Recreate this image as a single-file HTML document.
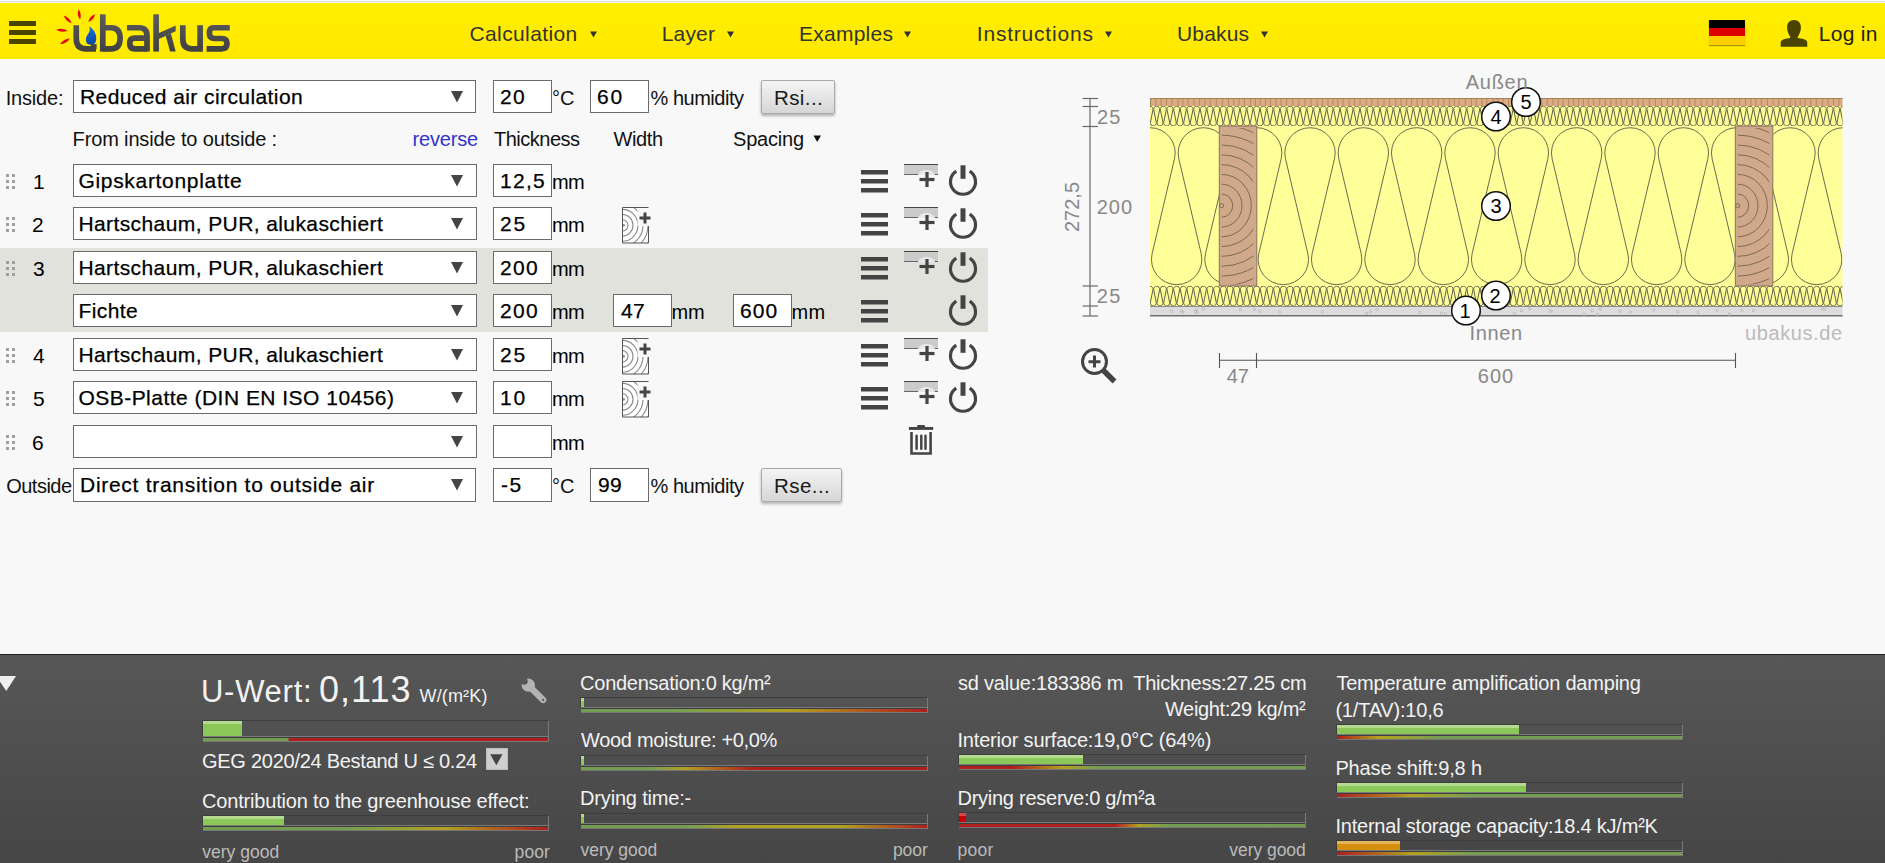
<!DOCTYPE html>
<html><head><meta charset="utf-8"><title>ubakus</title>
<style>
html,body{margin:0;padding:0;width:1885px;height:863px;overflow:hidden;background:#f8f8f8;font-family:"Liberation Sans", sans-serif}
.t{position:absolute;white-space:nowrap}
svg{overflow:visible}
</style></head><body>
<div style="position:absolute;left:0;top:0;width:1885px;height:1px;background:#fff"></div>
<div style="position:absolute;left:0;top:1px;width:1885px;height:1px;background:#dfe0de"></div>
<div style="position:absolute;left:0;top:2px;width:1885px;height:1px;background:#f4f5fc"></div>
<div style="position:absolute;left:0;top:3px;width:1885px;height:56px;background:linear-gradient(#ffef00,#ffe800)"></div>
<div style="position:absolute;left:9px;top:21px;width:27px;height:4.5px;background:#4a4400"></div>
<div style="position:absolute;left:9px;top:30px;width:27px;height:4.5px;background:#4a4400"></div>
<div style="position:absolute;left:9px;top:39px;width:27px;height:4.5px;background:#4a4400"></div>
<svg style="position:absolute;left:50px;top:5px" width="190" height="54" viewBox="50 5 190 54">
<defs><linearGradient id="lg" gradientUnits="userSpaceOnUse" x1="0" y1="14" x2="0" y2="52"><stop offset="0" stop-color="#5c5c5c"/><stop offset="1" stop-color="#404040"/></linearGradient>
<linearGradient id="dg" gradientUnits="userSpaceOnUse" x1="0" y1="26" x2="0" y2="45"><stop offset="0" stop-color="#2270d8"/><stop offset="1" stop-color="#0046a6"/></linearGradient></defs>
<g fill="none" stroke="url(#lg)" stroke-width="5.7" stroke-linecap="butt">
<path d="M76.25 25.2 V38.5 Q76.25 48.85 86 48.85 H96"/>
<path d="M93.75 44.1 V49"/>
<path d="M102.8 14.3 V51.6"/>
<path d="M102.8 27.75 H111 Q120.1 27.75 120.1 38.3 Q120.1 48.8 111 48.8 H102.8"/>
<path d="M127 27.75 H139 Q147 27.75 147 35.5 V51.6"/>
<path d="M147 38.2 H134.5 Q129.7 38.2 129.7 43.5 Q129.7 48.8 135 48.8 H147"/>
<path d="M156.1 14.3 V51.6"/>
<path d="M182.8 25.2 V39 Q182.8 48.8 192 48.8 H202.9"/>
<path d="M200.1 25.2 V49"/>
<path d="M229.8 27.75 H213.5 Q209.4 27.75 209.4 33 Q209.4 38.5 214.5 38.5 H222 Q227 38.5 227 43.6 Q227 48.8 221.5 48.8 H206.6"/>
</g>
<g fill="url(#lg)">
<path d="M158.9 32.9 L175.7 25.5 L175.7 31.3 L158.9 39Z"/>
<path d="M165.6 35.6 L170.9 33.6 L175.7 51.6 L170.1 51.6Z"/>
</g>
<g fill="#e30a17"><path d="M78.50 9.30 Q76.38 14.82 80.00 19.50 Q82.12 13.98 78.50 9.30Z"/><path d="M63.80 15.40 Q65.59 21.34 71.50 23.20 Q69.71 17.26 63.80 15.40Z"/><path d="M95.10 14.20 Q89.48 16.18 88.20 22.00 Q93.82 20.02 95.10 14.20Z"/><path d="M56.10 29.70 Q61.55 33.09 67.50 30.70 Q62.05 27.31 56.10 29.70Z"/><path d="M60.20 44.30 Q66.52 43.95 69.90 38.60 Q63.58 38.95 60.20 44.30Z"/></g>
<path d="M89.3 26.3 C95 30.5 96.6 35 96.2 39.5 Q95.7 44.7 91 44.7 Q85.9 44.7 85.9 40 Q85.9 36.5 88.3 33.6 Q90.6 30.5 89.3 26.3Z" fill="url(#dg)"/>
</svg>
<svg style="position:absolute;left:589.5px;top:31px" width="8" height="7"><path d="M0 0.5H7L3.5 6.5Z" fill="#333"/></svg>
<svg style="position:absolute;left:727px;top:31px" width="8" height="7"><path d="M0 0.5H7L3.5 6.5Z" fill="#333"/></svg>
<svg style="position:absolute;left:903.6px;top:31px" width="8" height="7"><path d="M0 0.5H7L3.5 6.5Z" fill="#333"/></svg>
<svg style="position:absolute;left:1105px;top:31px" width="8" height="7"><path d="M0 0.5H7L3.5 6.5Z" fill="#333"/></svg>
<svg style="position:absolute;left:1261.4px;top:31px" width="8" height="7"><path d="M0 0.5H7L3.5 6.5Z" fill="#333"/></svg>
<div style="position:absolute;left:1709px;top:20px;width:36px;height:24.5px;box-shadow:0 1px 1px rgba(0,0,0,.35)"><div style="height:8px;background:#000"></div><div style="height:8px;background:#dd0000"></div><div style="height:8.5px;background:#ffce00"></div></div>
<svg style="position:absolute;left:1778px;top:18px" width="32" height="32" viewBox="0 0 32 32"><path fill="#4a4400" d="M16 2.1 C11.8 2.1 9.1 5 9.1 9.3 C9.1 13 10.5 16.5 12.2 18.8 L12.2 20 C8 20.7 4.2 21.3 3.2 23 C2.7 23.8 2.7 25 2.7 28.7 L29.3 28.7 C29.3 25 29.3 23.8 28.8 23 C27.8 21.3 24 20.7 19.8 20 L19.8 18.8 C21.5 16.5 22.9 13 22.9 9.3 C22.9 5 20.2 2.1 16 2.1Z"/></svg>
<div style="position:absolute;left:0;top:248px;width:988px;height:84px;background:#e2e2dc"></div>
<div style="position:absolute;left:73px;top:80px;width:403px;height:33px;box-sizing:border-box;border:1px solid #6b6b6b;background:#fff"></div>
<svg style="position:absolute;left:451px;top:91px" width="13" height="12"><path d="M0 0H12L6 11.5Z" fill="#444"/></svg>
<div style="position:absolute;left:493px;top:80px;width:59px;height:33px;box-sizing:border-box;border:1px solid #6b6b6b;background:#fff"></div>
<div style="position:absolute;left:590px;top:80px;width:59px;height:33px;box-sizing:border-box;border:1px solid #6b6b6b;background:#fff"></div>
<div style="position:absolute;left:761px;top:80px;width:74px;height:34px;box-sizing:border-box;border:1px solid #a9a9a9;border-radius:2px;background:linear-gradient(#f4f4f4,#d6d6d6);box-shadow:0 2px 3px rgba(0,0,0,.28)"></div>
<svg style="position:absolute;left:813px;top:135px" width="9" height="8"><path d="M0.5 0.5H8L4.25 7Z" fill="#111"/></svg>
<div style="position:absolute;left:6px;top:174px;width:3px;height:3px;background:#a0a0a0"></div>
<div style="position:absolute;left:12px;top:174px;width:3px;height:3px;background:#a0a0a0"></div>
<div style="position:absolute;left:6px;top:180px;width:3px;height:3px;background:#a0a0a0"></div>
<div style="position:absolute;left:12px;top:180px;width:3px;height:3px;background:#a0a0a0"></div>
<div style="position:absolute;left:6px;top:186px;width:3px;height:3px;background:#a0a0a0"></div>
<div style="position:absolute;left:12px;top:186px;width:3px;height:3px;background:#a0a0a0"></div>
<div style="position:absolute;left:73px;top:164px;width:404px;height:33px;box-sizing:border-box;border:1px solid #6b6b6b;background:#fff"></div>
<svg style="position:absolute;left:451px;top:175px" width="13" height="12"><path d="M0 0H12L6 11.5Z" fill="#444"/></svg>
<div style="position:absolute;left:493px;top:164px;width:59px;height:33px;box-sizing:border-box;border:1px solid #6b6b6b;background:#fff"></div>
<svg style="position:absolute;left:861px;top:169px" width="27" height="24"><rect x="0" y="1" width="27" height="4.5" fill="#444"/><rect x="0" y="10" width="27" height="4.5" fill="#444"/><rect x="0" y="19" width="27" height="4.5" fill="#444"/></svg>
<svg style="position:absolute;left:903px;top:164px" width="36" height="25"><rect x="1" y="0" width="34" height="1" fill="#444"/><rect x="1" y="1" width="34" height="9.5" fill="#cbcbcb"/><rect x="1" y="10" width="34" height="1" fill="#666"/>
<path d="M14.8 11 A9 7 0 0 1 32 11Z" fill="#e8e8e8"/><rect x="22.4" y="8" width="3.2" height="15" fill="#444"/><rect x="16.5" y="13.9" width="15" height="3.2" fill="#444"/></svg>
<svg style="position:absolute;left:947px;top:164px" width="32" height="34"><path d="M9.3 7.2 A12.5 12.5 0 1 0 22.7 7.2" fill="none" stroke="#444" stroke-width="3.2"/><rect x="13.5" y="1.3" width="5" height="13.5" fill="#444"/></svg>
<div style="position:absolute;left:6px;top:217px;width:3px;height:3px;background:#a0a0a0"></div>
<div style="position:absolute;left:12px;top:217px;width:3px;height:3px;background:#a0a0a0"></div>
<div style="position:absolute;left:6px;top:223px;width:3px;height:3px;background:#a0a0a0"></div>
<div style="position:absolute;left:12px;top:223px;width:3px;height:3px;background:#a0a0a0"></div>
<div style="position:absolute;left:6px;top:229px;width:3px;height:3px;background:#a0a0a0"></div>
<div style="position:absolute;left:12px;top:229px;width:3px;height:3px;background:#a0a0a0"></div>
<div style="position:absolute;left:73px;top:207px;width:404px;height:33px;box-sizing:border-box;border:1px solid #6b6b6b;background:#fff"></div>
<svg style="position:absolute;left:451px;top:218px" width="13" height="12"><path d="M0 0H12L6 11.5Z" fill="#444"/></svg>
<div style="position:absolute;left:493px;top:207px;width:59px;height:33px;box-sizing:border-box;border:1px solid #6b6b6b;background:#fff"></div>
<svg style="position:absolute;left:621px;top:207px" width="34" height="38"><defs><clipPath id="wc207"><rect x="1.5" y="1" width="26" height="35"/></clipPath></defs><rect x="1.5" y="0.5" width="26" height="35.5" fill="#fff"/><g clip-path="url(#wc207)" fill="none" stroke="#8a8a8a" stroke-width="1.1"><ellipse cx="1.5" cy="18.3" rx="5.5" ry="5.665"/><ellipse cx="1.5" cy="18.3" rx="10.5" ry="10.815"/><ellipse cx="1.5" cy="18.3" rx="15.5" ry="15.965"/><ellipse cx="1.5" cy="18.3" rx="20.5" ry="21.115000000000002"/><ellipse cx="1.5" cy="18.3" rx="25.5" ry="26.265"/><ellipse cx="1.5" cy="18.3" rx="30.5" ry="31.415"/><ellipse cx="1.5" cy="18.3" rx="35.5" ry="36.565"/><circle cx="2.5" cy="18.3" r="1.4" fill="#8a8a8a" stroke="none"/></g><path d="M1.5 0.5 H27.5 M1.5 0.5 V36 H27.5 V19" fill="none" stroke="#555" stroke-width="1"/><rect x="16.5" y="1" width="15" height="18" fill="#f8f8f8"/><rect x="22.5" y="5.5" width="3" height="11" fill="#444"/><rect x="18.5" y="9.5" width="11" height="3" fill="#444"/></svg>
<svg style="position:absolute;left:861px;top:212px" width="27" height="24"><rect x="0" y="1" width="27" height="4.5" fill="#444"/><rect x="0" y="10" width="27" height="4.5" fill="#444"/><rect x="0" y="19" width="27" height="4.5" fill="#444"/></svg>
<svg style="position:absolute;left:903px;top:207px" width="36" height="25"><rect x="1" y="0" width="34" height="1" fill="#444"/><rect x="1" y="1" width="34" height="9.5" fill="#cbcbcb"/><rect x="1" y="10" width="34" height="1" fill="#666"/>
<path d="M14.8 11 A9 7 0 0 1 32 11Z" fill="#e8e8e8"/><rect x="22.4" y="8" width="3.2" height="15" fill="#444"/><rect x="16.5" y="13.9" width="15" height="3.2" fill="#444"/></svg>
<svg style="position:absolute;left:947px;top:207px" width="32" height="34"><path d="M9.3 7.2 A12.5 12.5 0 1 0 22.7 7.2" fill="none" stroke="#444" stroke-width="3.2"/><rect x="13.5" y="1.3" width="5" height="13.5" fill="#444"/></svg>
<div style="position:absolute;left:6px;top:261px;width:3px;height:3px;background:#a0a0a0"></div>
<div style="position:absolute;left:12px;top:261px;width:3px;height:3px;background:#a0a0a0"></div>
<div style="position:absolute;left:6px;top:267px;width:3px;height:3px;background:#a0a0a0"></div>
<div style="position:absolute;left:12px;top:267px;width:3px;height:3px;background:#a0a0a0"></div>
<div style="position:absolute;left:6px;top:273px;width:3px;height:3px;background:#a0a0a0"></div>
<div style="position:absolute;left:12px;top:273px;width:3px;height:3px;background:#a0a0a0"></div>
<div style="position:absolute;left:73px;top:251px;width:404px;height:33px;box-sizing:border-box;border:1px solid #6b6b6b;background:#fff"></div>
<svg style="position:absolute;left:451px;top:262px" width="13" height="12"><path d="M0 0H12L6 11.5Z" fill="#444"/></svg>
<div style="position:absolute;left:493px;top:251px;width:59px;height:33px;box-sizing:border-box;border:1px solid #6b6b6b;background:#fff"></div>
<svg style="position:absolute;left:861px;top:256px" width="27" height="24"><rect x="0" y="1" width="27" height="4.5" fill="#444"/><rect x="0" y="10" width="27" height="4.5" fill="#444"/><rect x="0" y="19" width="27" height="4.5" fill="#444"/></svg>
<svg style="position:absolute;left:903px;top:251px" width="36" height="25"><rect x="1" y="0" width="34" height="1" fill="#444"/><rect x="1" y="1" width="34" height="9.5" fill="#cbcbcb"/><rect x="1" y="10" width="34" height="1" fill="#666"/>
<path d="M14.8 11 A9 7 0 0 1 32 11Z" fill="#e8e8e8"/><rect x="22.4" y="8" width="3.2" height="15" fill="#444"/><rect x="16.5" y="13.9" width="15" height="3.2" fill="#444"/></svg>
<svg style="position:absolute;left:947px;top:251px" width="32" height="34"><path d="M9.3 7.2 A12.5 12.5 0 1 0 22.7 7.2" fill="none" stroke="#444" stroke-width="3.2"/><rect x="13.5" y="1.3" width="5" height="13.5" fill="#444"/></svg>
<div style="position:absolute;left:6px;top:348px;width:3px;height:3px;background:#a0a0a0"></div>
<div style="position:absolute;left:12px;top:348px;width:3px;height:3px;background:#a0a0a0"></div>
<div style="position:absolute;left:6px;top:354px;width:3px;height:3px;background:#a0a0a0"></div>
<div style="position:absolute;left:12px;top:354px;width:3px;height:3px;background:#a0a0a0"></div>
<div style="position:absolute;left:6px;top:360px;width:3px;height:3px;background:#a0a0a0"></div>
<div style="position:absolute;left:12px;top:360px;width:3px;height:3px;background:#a0a0a0"></div>
<div style="position:absolute;left:73px;top:338px;width:404px;height:33px;box-sizing:border-box;border:1px solid #6b6b6b;background:#fff"></div>
<svg style="position:absolute;left:451px;top:349px" width="13" height="12"><path d="M0 0H12L6 11.5Z" fill="#444"/></svg>
<div style="position:absolute;left:493px;top:338px;width:59px;height:33px;box-sizing:border-box;border:1px solid #6b6b6b;background:#fff"></div>
<svg style="position:absolute;left:621px;top:338px" width="34" height="38"><defs><clipPath id="wc338"><rect x="1.5" y="1" width="26" height="35"/></clipPath></defs><rect x="1.5" y="0.5" width="26" height="35.5" fill="#fff"/><g clip-path="url(#wc338)" fill="none" stroke="#8a8a8a" stroke-width="1.1"><ellipse cx="1.5" cy="18.3" rx="5.5" ry="5.665"/><ellipse cx="1.5" cy="18.3" rx="10.5" ry="10.815"/><ellipse cx="1.5" cy="18.3" rx="15.5" ry="15.965"/><ellipse cx="1.5" cy="18.3" rx="20.5" ry="21.115000000000002"/><ellipse cx="1.5" cy="18.3" rx="25.5" ry="26.265"/><ellipse cx="1.5" cy="18.3" rx="30.5" ry="31.415"/><ellipse cx="1.5" cy="18.3" rx="35.5" ry="36.565"/><circle cx="2.5" cy="18.3" r="1.4" fill="#8a8a8a" stroke="none"/></g><path d="M1.5 0.5 H27.5 M1.5 0.5 V36 H27.5 V19" fill="none" stroke="#555" stroke-width="1"/><rect x="16.5" y="1" width="15" height="18" fill="#f8f8f8"/><rect x="22.5" y="5.5" width="3" height="11" fill="#444"/><rect x="18.5" y="9.5" width="11" height="3" fill="#444"/></svg>
<svg style="position:absolute;left:861px;top:343px" width="27" height="24"><rect x="0" y="1" width="27" height="4.5" fill="#444"/><rect x="0" y="10" width="27" height="4.5" fill="#444"/><rect x="0" y="19" width="27" height="4.5" fill="#444"/></svg>
<svg style="position:absolute;left:903px;top:338px" width="36" height="25"><rect x="1" y="0" width="34" height="1" fill="#444"/><rect x="1" y="1" width="34" height="9.5" fill="#cbcbcb"/><rect x="1" y="10" width="34" height="1" fill="#666"/>
<path d="M14.8 11 A9 7 0 0 1 32 11Z" fill="#e8e8e8"/><rect x="22.4" y="8" width="3.2" height="15" fill="#444"/><rect x="16.5" y="13.9" width="15" height="3.2" fill="#444"/></svg>
<svg style="position:absolute;left:947px;top:338px" width="32" height="34"><path d="M9.3 7.2 A12.5 12.5 0 1 0 22.7 7.2" fill="none" stroke="#444" stroke-width="3.2"/><rect x="13.5" y="1.3" width="5" height="13.5" fill="#444"/></svg>
<div style="position:absolute;left:6px;top:391px;width:3px;height:3px;background:#a0a0a0"></div>
<div style="position:absolute;left:12px;top:391px;width:3px;height:3px;background:#a0a0a0"></div>
<div style="position:absolute;left:6px;top:397px;width:3px;height:3px;background:#a0a0a0"></div>
<div style="position:absolute;left:12px;top:397px;width:3px;height:3px;background:#a0a0a0"></div>
<div style="position:absolute;left:6px;top:403px;width:3px;height:3px;background:#a0a0a0"></div>
<div style="position:absolute;left:12px;top:403px;width:3px;height:3px;background:#a0a0a0"></div>
<div style="position:absolute;left:73px;top:381px;width:404px;height:33px;box-sizing:border-box;border:1px solid #6b6b6b;background:#fff"></div>
<svg style="position:absolute;left:451px;top:392px" width="13" height="12"><path d="M0 0H12L6 11.5Z" fill="#444"/></svg>
<div style="position:absolute;left:493px;top:381px;width:59px;height:33px;box-sizing:border-box;border:1px solid #6b6b6b;background:#fff"></div>
<svg style="position:absolute;left:621px;top:381px" width="34" height="38"><defs><clipPath id="wc381"><rect x="1.5" y="1" width="26" height="35"/></clipPath></defs><rect x="1.5" y="0.5" width="26" height="35.5" fill="#fff"/><g clip-path="url(#wc381)" fill="none" stroke="#8a8a8a" stroke-width="1.1"><ellipse cx="1.5" cy="18.3" rx="5.5" ry="5.665"/><ellipse cx="1.5" cy="18.3" rx="10.5" ry="10.815"/><ellipse cx="1.5" cy="18.3" rx="15.5" ry="15.965"/><ellipse cx="1.5" cy="18.3" rx="20.5" ry="21.115000000000002"/><ellipse cx="1.5" cy="18.3" rx="25.5" ry="26.265"/><ellipse cx="1.5" cy="18.3" rx="30.5" ry="31.415"/><ellipse cx="1.5" cy="18.3" rx="35.5" ry="36.565"/><circle cx="2.5" cy="18.3" r="1.4" fill="#8a8a8a" stroke="none"/></g><path d="M1.5 0.5 H27.5 M1.5 0.5 V36 H27.5 V19" fill="none" stroke="#555" stroke-width="1"/><rect x="16.5" y="1" width="15" height="18" fill="#f8f8f8"/><rect x="22.5" y="5.5" width="3" height="11" fill="#444"/><rect x="18.5" y="9.5" width="11" height="3" fill="#444"/></svg>
<svg style="position:absolute;left:861px;top:386px" width="27" height="24"><rect x="0" y="1" width="27" height="4.5" fill="#444"/><rect x="0" y="10" width="27" height="4.5" fill="#444"/><rect x="0" y="19" width="27" height="4.5" fill="#444"/></svg>
<svg style="position:absolute;left:903px;top:381px" width="36" height="25"><rect x="1" y="0" width="34" height="1" fill="#444"/><rect x="1" y="1" width="34" height="9.5" fill="#cbcbcb"/><rect x="1" y="10" width="34" height="1" fill="#666"/>
<path d="M14.8 11 A9 7 0 0 1 32 11Z" fill="#e8e8e8"/><rect x="22.4" y="8" width="3.2" height="15" fill="#444"/><rect x="16.5" y="13.9" width="15" height="3.2" fill="#444"/></svg>
<svg style="position:absolute;left:947px;top:381px" width="32" height="34"><path d="M9.3 7.2 A12.5 12.5 0 1 0 22.7 7.2" fill="none" stroke="#444" stroke-width="3.2"/><rect x="13.5" y="1.3" width="5" height="13.5" fill="#444"/></svg>
<div style="position:absolute;left:6px;top:435px;width:3px;height:3px;background:#a0a0a0"></div>
<div style="position:absolute;left:12px;top:435px;width:3px;height:3px;background:#a0a0a0"></div>
<div style="position:absolute;left:6px;top:441px;width:3px;height:3px;background:#a0a0a0"></div>
<div style="position:absolute;left:12px;top:441px;width:3px;height:3px;background:#a0a0a0"></div>
<div style="position:absolute;left:6px;top:447px;width:3px;height:3px;background:#a0a0a0"></div>
<div style="position:absolute;left:12px;top:447px;width:3px;height:3px;background:#a0a0a0"></div>
<div style="position:absolute;left:73px;top:425px;width:404px;height:33px;box-sizing:border-box;border:1px solid #6b6b6b;background:#fff"></div>
<svg style="position:absolute;left:451px;top:436px" width="13" height="12"><path d="M0 0H12L6 11.5Z" fill="#444"/></svg>
<div style="position:absolute;left:493px;top:425px;width:59px;height:33px;box-sizing:border-box;border:1px solid #6b6b6b;background:#fff"></div>
<svg style="position:absolute;left:908px;top:424px" width="27" height="32"><rect x="0.9" y="3" width="24.3" height="2.9" fill="#444"/><path d="M9.6 1.1 H16.5 L17.2 3.1 H8.9Z" fill="#444"/><path d="M3.5 8 V29.45 H22.6 V8" fill="none" stroke="#444" stroke-width="2.6"/><path d="M8.6 11.8V24.7M13.3 11.8V24.7M17.5 11.8V24.7" stroke="#444" stroke-width="2.5" stroke-linecap="round"/></svg>
<div style="position:absolute;left:73px;top:294px;width:404px;height:33px;box-sizing:border-box;border:1px solid #6b6b6b;background:#fff"></div>
<svg style="position:absolute;left:451px;top:305px" width="13" height="12"><path d="M0 0H12L6 11.5Z" fill="#444"/></svg>
<div style="position:absolute;left:493px;top:294px;width:59px;height:33px;box-sizing:border-box;border:1px solid #6b6b6b;background:#fff"></div>
<div style="position:absolute;left:613px;top:294px;width:59px;height:33px;box-sizing:border-box;border:1px solid #6b6b6b;background:#fff"></div>
<div style="position:absolute;left:733px;top:294px;width:59px;height:33px;box-sizing:border-box;border:1px solid #6b6b6b;background:#fff"></div>
<svg style="position:absolute;left:861px;top:299px" width="27" height="24"><rect x="0" y="1" width="27" height="4.5" fill="#444"/><rect x="0" y="10" width="27" height="4.5" fill="#444"/><rect x="0" y="19" width="27" height="4.5" fill="#444"/></svg>
<svg style="position:absolute;left:947px;top:294px" width="32" height="34"><path d="M9.3 7.2 A12.5 12.5 0 1 0 22.7 7.2" fill="none" stroke="#444" stroke-width="3.2"/><rect x="13.5" y="1.3" width="5" height="13.5" fill="#444"/></svg>
<div style="position:absolute;left:73px;top:468px;width:403px;height:34px;box-sizing:border-box;border:1px solid #6b6b6b;background:#fff"></div>
<svg style="position:absolute;left:451px;top:479px" width="13" height="12"><path d="M0 0H12L6 11.5Z" fill="#444"/></svg>
<div style="position:absolute;left:493px;top:468px;width:59px;height:34px;box-sizing:border-box;border:1px solid #6b6b6b;background:#fff"></div>
<div style="position:absolute;left:590px;top:468px;width:59px;height:34px;box-sizing:border-box;border:1px solid #6b6b6b;background:#fff"></div>
<div style="position:absolute;left:761px;top:468px;width:81px;height:34px;box-sizing:border-box;border:1px solid #a9a9a9;border-radius:2px;background:linear-gradient(#f4f4f4,#d6d6d6);box-shadow:0 2px 3px rgba(0,0,0,.28)"></div>
<svg style="position:absolute;left:1050px;top:60px" width="835" height="340" viewBox="1050 60 835 340"><defs><clipPath id="cl4"><rect x="1150" y="106" width="692.5" height="20"/></clipPath><clipPath id="cl3"><rect x="1150" y="126" width="692.5" height="160"/></clipPath><clipPath id="cl2"><rect x="1150" y="286" width="692.5" height="20.5"/></clipPath><clipPath id="st0"><rect x="1221.8" y="128" width="31.5" height="156.5"/></clipPath><clipPath id="st1"><rect x="1737.8" y="128" width="31.5" height="156.5"/></clipPath></defs><rect x="1150" y="98" width="692.5" height="8" fill="#dcab85"/><rect x="1155.3" y="98.5" width="1" height="7.5" fill="#b08a60"/><rect x="1160.6" y="98.5" width="1" height="7.5" fill="#b08a60"/><rect x="1165.9" y="98.5" width="1" height="7.5" fill="#b08a60"/><rect x="1171.5" y="98.5" width="1" height="7.5" fill="#b08a60"/><rect x="1177.6" y="98.5" width="1" height="7.5" fill="#b08a60"/><rect x="1182.5" y="98.5" width="1" height="7.5" fill="#b08a60"/><rect x="1187.4" y="98.5" width="1" height="7.5" fill="#b08a60"/><rect x="1193.5" y="98.5" width="1" height="7.5" fill="#b08a60"/><rect x="1199.1" y="98.5" width="1" height="7.5" fill="#b08a60"/><rect x="1204.4" y="98.5" width="1" height="7.5" fill="#b08a60"/><rect x="1209.7" y="98.5" width="1" height="7.5" fill="#b08a60"/><rect x="1215.8" y="98.5" width="1" height="7.5" fill="#b08a60"/><rect x="1221.9" y="98.5" width="1" height="7.5" fill="#b08a60"/><rect x="1228.0" y="98.5" width="1" height="7.5" fill="#b08a60"/><rect x="1233.3" y="98.5" width="1" height="7.5" fill="#b08a60"/><rect x="1238.6" y="98.5" width="1" height="7.5" fill="#b08a60"/><rect x="1243.9" y="98.5" width="1" height="7.5" fill="#b08a60"/><rect x="1250.0" y="98.5" width="1" height="7.5" fill="#b08a60"/><rect x="1254.9" y="98.5" width="1" height="7.5" fill="#b08a60"/><rect x="1259.8" y="98.5" width="1" height="7.5" fill="#b08a60"/><rect x="1265.1" y="98.5" width="1" height="7.5" fill="#b08a60"/><rect x="1270.0" y="98.5" width="1" height="7.5" fill="#b08a60"/><rect x="1275.6" y="98.5" width="1" height="7.5" fill="#b08a60"/><rect x="1280.5" y="98.5" width="1" height="7.5" fill="#b08a60"/><rect x="1286.1" y="98.5" width="1" height="7.5" fill="#b08a60"/><rect x="1292.2" y="98.5" width="1" height="7.5" fill="#b08a60"/><rect x="1298.3" y="98.5" width="1" height="7.5" fill="#b08a60"/><rect x="1304.4" y="98.5" width="1" height="7.5" fill="#b08a60"/><rect x="1310.5" y="98.5" width="1" height="7.5" fill="#b08a60"/><rect x="1316.6" y="98.5" width="1" height="7.5" fill="#b08a60"/><rect x="1321.9" y="98.5" width="1" height="7.5" fill="#b08a60"/><rect x="1327.5" y="98.5" width="1" height="7.5" fill="#b08a60"/><rect x="1332.4" y="98.5" width="1" height="7.5" fill="#b08a60"/><rect x="1337.3" y="98.5" width="1" height="7.5" fill="#b08a60"/><rect x="1342.6" y="98.5" width="1" height="7.5" fill="#b08a60"/><rect x="1348.7" y="98.5" width="1" height="7.5" fill="#b08a60"/><rect x="1354.0" y="98.5" width="1" height="7.5" fill="#b08a60"/><rect x="1359.6" y="98.5" width="1" height="7.5" fill="#b08a60"/><rect x="1365.7" y="98.5" width="1" height="7.5" fill="#b08a60"/><rect x="1371.3" y="98.5" width="1" height="7.5" fill="#b08a60"/><rect x="1377.4" y="98.5" width="1" height="7.5" fill="#b08a60"/><rect x="1383.5" y="98.5" width="1" height="7.5" fill="#b08a60"/><rect x="1389.1" y="98.5" width="1" height="7.5" fill="#b08a60"/><rect x="1395.2" y="98.5" width="1" height="7.5" fill="#b08a60"/><rect x="1400.5" y="98.5" width="1" height="7.5" fill="#b08a60"/><rect x="1406.1" y="98.5" width="1" height="7.5" fill="#b08a60"/><rect x="1411.0" y="98.5" width="1" height="7.5" fill="#b08a60"/><rect x="1416.6" y="98.5" width="1" height="7.5" fill="#b08a60"/><rect x="1421.9" y="98.5" width="1" height="7.5" fill="#b08a60"/><rect x="1427.5" y="98.5" width="1" height="7.5" fill="#b08a60"/><rect x="1432.4" y="98.5" width="1" height="7.5" fill="#b08a60"/><rect x="1437.7" y="98.5" width="1" height="7.5" fill="#b08a60"/><rect x="1443.3" y="98.5" width="1" height="7.5" fill="#b08a60"/><rect x="1448.9" y="98.5" width="1" height="7.5" fill="#b08a60"/><rect x="1453.8" y="98.5" width="1" height="7.5" fill="#b08a60"/><rect x="1458.7" y="98.5" width="1" height="7.5" fill="#b08a60"/><rect x="1464.8" y="98.5" width="1" height="7.5" fill="#b08a60"/><rect x="1470.9" y="98.5" width="1" height="7.5" fill="#b08a60"/><rect x="1475.8" y="98.5" width="1" height="7.5" fill="#b08a60"/><rect x="1481.4" y="98.5" width="1" height="7.5" fill="#b08a60"/><rect x="1486.3" y="98.5" width="1" height="7.5" fill="#b08a60"/><rect x="1492.4" y="98.5" width="1" height="7.5" fill="#b08a60"/><rect x="1497.7" y="98.5" width="1" height="7.5" fill="#b08a60"/><rect x="1502.6" y="98.5" width="1" height="7.5" fill="#b08a60"/><rect x="1508.2" y="98.5" width="1" height="7.5" fill="#b08a60"/><rect x="1514.3" y="98.5" width="1" height="7.5" fill="#b08a60"/><rect x="1520.4" y="98.5" width="1" height="7.5" fill="#b08a60"/><rect x="1525.3" y="98.5" width="1" height="7.5" fill="#b08a60"/><rect x="1530.2" y="98.5" width="1" height="7.5" fill="#b08a60"/><rect x="1535.1" y="98.5" width="1" height="7.5" fill="#b08a60"/><rect x="1541.2" y="98.5" width="1" height="7.5" fill="#b08a60"/><rect x="1546.8" y="98.5" width="1" height="7.5" fill="#b08a60"/><rect x="1552.4" y="98.5" width="1" height="7.5" fill="#b08a60"/><rect x="1557.7" y="98.5" width="1" height="7.5" fill="#b08a60"/><rect x="1562.6" y="98.5" width="1" height="7.5" fill="#b08a60"/><rect x="1568.2" y="98.5" width="1" height="7.5" fill="#b08a60"/><rect x="1573.1" y="98.5" width="1" height="7.5" fill="#b08a60"/><rect x="1578.0" y="98.5" width="1" height="7.5" fill="#b08a60"/><rect x="1582.9" y="98.5" width="1" height="7.5" fill="#b08a60"/><rect x="1587.8" y="98.5" width="1" height="7.5" fill="#b08a60"/><rect x="1593.1" y="98.5" width="1" height="7.5" fill="#b08a60"/><rect x="1599.2" y="98.5" width="1" height="7.5" fill="#b08a60"/><rect x="1604.8" y="98.5" width="1" height="7.5" fill="#b08a60"/><rect x="1610.4" y="98.5" width="1" height="7.5" fill="#b08a60"/><rect x="1615.7" y="98.5" width="1" height="7.5" fill="#b08a60"/><rect x="1620.6" y="98.5" width="1" height="7.5" fill="#b08a60"/><rect x="1626.2" y="98.5" width="1" height="7.5" fill="#b08a60"/><rect x="1631.8" y="98.5" width="1" height="7.5" fill="#b08a60"/><rect x="1637.4" y="98.5" width="1" height="7.5" fill="#b08a60"/><rect x="1642.7" y="98.5" width="1" height="7.5" fill="#b08a60"/><rect x="1648.8" y="98.5" width="1" height="7.5" fill="#b08a60"/><rect x="1654.9" y="98.5" width="1" height="7.5" fill="#b08a60"/><rect x="1661.0" y="98.5" width="1" height="7.5" fill="#b08a60"/><rect x="1667.1" y="98.5" width="1" height="7.5" fill="#b08a60"/><rect x="1672.0" y="98.5" width="1" height="7.5" fill="#b08a60"/><rect x="1677.6" y="98.5" width="1" height="7.5" fill="#b08a60"/><rect x="1683.7" y="98.5" width="1" height="7.5" fill="#b08a60"/><rect x="1689.0" y="98.5" width="1" height="7.5" fill="#b08a60"/><rect x="1694.6" y="98.5" width="1" height="7.5" fill="#b08a60"/><rect x="1700.7" y="98.5" width="1" height="7.5" fill="#b08a60"/><rect x="1706.3" y="98.5" width="1" height="7.5" fill="#b08a60"/><rect x="1711.9" y="98.5" width="1" height="7.5" fill="#b08a60"/><rect x="1717.5" y="98.5" width="1" height="7.5" fill="#b08a60"/><rect x="1722.4" y="98.5" width="1" height="7.5" fill="#b08a60"/><rect x="1728.5" y="98.5" width="1" height="7.5" fill="#b08a60"/><rect x="1734.1" y="98.5" width="1" height="7.5" fill="#b08a60"/><rect x="1739.0" y="98.5" width="1" height="7.5" fill="#b08a60"/><rect x="1745.1" y="98.5" width="1" height="7.5" fill="#b08a60"/><rect x="1750.4" y="98.5" width="1" height="7.5" fill="#b08a60"/><rect x="1755.3" y="98.5" width="1" height="7.5" fill="#b08a60"/><rect x="1760.9" y="98.5" width="1" height="7.5" fill="#b08a60"/><rect x="1767.0" y="98.5" width="1" height="7.5" fill="#b08a60"/><rect x="1772.6" y="98.5" width="1" height="7.5" fill="#b08a60"/><rect x="1778.2" y="98.5" width="1" height="7.5" fill="#b08a60"/><rect x="1783.8" y="98.5" width="1" height="7.5" fill="#b08a60"/><rect x="1789.9" y="98.5" width="1" height="7.5" fill="#b08a60"/><rect x="1794.8" y="98.5" width="1" height="7.5" fill="#b08a60"/><rect x="1799.7" y="98.5" width="1" height="7.5" fill="#b08a60"/><rect x="1804.6" y="98.5" width="1" height="7.5" fill="#b08a60"/><rect x="1810.2" y="98.5" width="1" height="7.5" fill="#b08a60"/><rect x="1815.8" y="98.5" width="1" height="7.5" fill="#b08a60"/><rect x="1821.9" y="98.5" width="1" height="7.5" fill="#b08a60"/><rect x="1827.5" y="98.5" width="1" height="7.5" fill="#b08a60"/><rect x="1833.1" y="98.5" width="1" height="7.5" fill="#b08a60"/><rect x="1838.4" y="98.5" width="1" height="7.5" fill="#b08a60"/><rect x="1150" y="98" width="692.5" height="1" fill="#a3835a"/><rect x="1150" y="98" width="1" height="8" fill="#a3835a"/><rect x="1150" y="106" width="692.5" height="200.5" fill="#ffff99"/><g clip-path="url(#cl4)"><path d="M1133.73 109.79 A3.0 3.0 0 1 1 1139.61 109.79 L1137.06 122.41 A3.0 3.0 0 1 0 1142.94 122.41 L1140.39 109.79 A3.0 3.0 0 1 1 1146.27 109.79 L1143.73 122.41 A3.0 3.0 0 1 0 1149.61 122.41 L1147.06 109.79 A3.0 3.0 0 1 1 1152.94 109.79 L1150.39 122.41 A3.0 3.0 0 1 0 1156.27 122.41 L1153.73 109.79 A3.0 3.0 0 1 1 1159.61 109.79 L1157.06 122.41 A3.0 3.0 0 1 0 1162.94 122.41 L1160.39 109.79 A3.0 3.0 0 1 1 1166.27 109.79 L1163.73 122.41 A3.0 3.0 0 1 0 1169.61 122.41 L1167.06 109.79 A3.0 3.0 0 1 1 1172.94 109.79 L1170.39 122.41 A3.0 3.0 0 1 0 1176.27 122.41 L1173.73 109.79 A3.0 3.0 0 1 1 1179.61 109.79 L1177.06 122.41 A3.0 3.0 0 1 0 1182.94 122.41 L1180.39 109.79 A3.0 3.0 0 1 1 1186.27 109.79 L1183.73 122.41 A3.0 3.0 0 1 0 1189.61 122.41 L1187.06 109.79 A3.0 3.0 0 1 1 1192.94 109.79 L1190.39 122.41 A3.0 3.0 0 1 0 1196.27 122.41 L1193.73 109.79 A3.0 3.0 0 1 1 1199.61 109.79 L1197.06 122.41 A3.0 3.0 0 1 0 1202.94 122.41 L1200.39 109.79 A3.0 3.0 0 1 1 1206.27 109.79 L1203.73 122.41 A3.0 3.0 0 1 0 1209.61 122.41 L1207.06 109.79 A3.0 3.0 0 1 1 1212.94 109.79 L1210.39 122.41 A3.0 3.0 0 1 0 1216.27 122.41 L1213.73 109.79 A3.0 3.0 0 1 1 1219.61 109.79 L1217.06 122.41 A3.0 3.0 0 1 0 1222.94 122.41 L1220.39 109.79 A3.0 3.0 0 1 1 1226.27 109.79 L1223.73 122.41 A3.0 3.0 0 1 0 1229.61 122.41 L1227.06 109.79 A3.0 3.0 0 1 1 1232.94 109.79 L1230.39 122.41 A3.0 3.0 0 1 0 1236.27 122.41 L1233.73 109.79 A3.0 3.0 0 1 1 1239.61 109.79 L1237.06 122.41 A3.0 3.0 0 1 0 1242.94 122.41 L1240.39 109.79 A3.0 3.0 0 1 1 1246.27 109.79 L1243.73 122.41 A3.0 3.0 0 1 0 1249.61 122.41 L1247.06 109.79 A3.0 3.0 0 1 1 1252.94 109.79 L1250.39 122.41 A3.0 3.0 0 1 0 1256.27 122.41 L1253.73 109.79 A3.0 3.0 0 1 1 1259.61 109.79 L1257.06 122.41 A3.0 3.0 0 1 0 1262.94 122.41 L1260.39 109.79 A3.0 3.0 0 1 1 1266.27 109.79 L1263.73 122.41 A3.0 3.0 0 1 0 1269.61 122.41 L1267.06 109.79 A3.0 3.0 0 1 1 1272.94 109.79 L1270.39 122.41 A3.0 3.0 0 1 0 1276.27 122.41 L1273.73 109.79 A3.0 3.0 0 1 1 1279.61 109.79 L1277.06 122.41 A3.0 3.0 0 1 0 1282.94 122.41 L1280.39 109.79 A3.0 3.0 0 1 1 1286.27 109.79 L1283.73 122.41 A3.0 3.0 0 1 0 1289.61 122.41 L1287.06 109.79 A3.0 3.0 0 1 1 1292.94 109.79 L1290.39 122.41 A3.0 3.0 0 1 0 1296.27 122.41 L1293.73 109.79 A3.0 3.0 0 1 1 1299.61 109.79 L1297.06 122.41 A3.0 3.0 0 1 0 1302.94 122.41 L1300.39 109.79 A3.0 3.0 0 1 1 1306.27 109.79 L1303.73 122.41 A3.0 3.0 0 1 0 1309.61 122.41 L1307.06 109.79 A3.0 3.0 0 1 1 1312.94 109.79 L1310.39 122.41 A3.0 3.0 0 1 0 1316.27 122.41 L1313.73 109.79 A3.0 3.0 0 1 1 1319.61 109.79 L1317.06 122.41 A3.0 3.0 0 1 0 1322.94 122.41 L1320.39 109.79 A3.0 3.0 0 1 1 1326.27 109.79 L1323.73 122.41 A3.0 3.0 0 1 0 1329.61 122.41 L1327.06 109.79 A3.0 3.0 0 1 1 1332.94 109.79 L1330.39 122.41 A3.0 3.0 0 1 0 1336.27 122.41 L1333.73 109.79 A3.0 3.0 0 1 1 1339.61 109.79 L1337.06 122.41 A3.0 3.0 0 1 0 1342.94 122.41 L1340.39 109.79 A3.0 3.0 0 1 1 1346.27 109.79 L1343.73 122.41 A3.0 3.0 0 1 0 1349.61 122.41 L1347.06 109.79 A3.0 3.0 0 1 1 1352.94 109.79 L1350.39 122.41 A3.0 3.0 0 1 0 1356.27 122.41 L1353.73 109.79 A3.0 3.0 0 1 1 1359.61 109.79 L1357.06 122.41 A3.0 3.0 0 1 0 1362.94 122.41 L1360.39 109.79 A3.0 3.0 0 1 1 1366.27 109.79 L1363.73 122.41 A3.0 3.0 0 1 0 1369.61 122.41 L1367.06 109.79 A3.0 3.0 0 1 1 1372.94 109.79 L1370.39 122.41 A3.0 3.0 0 1 0 1376.27 122.41 L1373.73 109.79 A3.0 3.0 0 1 1 1379.61 109.79 L1377.06 122.41 A3.0 3.0 0 1 0 1382.94 122.41 L1380.39 109.79 A3.0 3.0 0 1 1 1386.27 109.79 L1383.73 122.41 A3.0 3.0 0 1 0 1389.61 122.41 L1387.06 109.79 A3.0 3.0 0 1 1 1392.94 109.79 L1390.39 122.41 A3.0 3.0 0 1 0 1396.27 122.41 L1393.73 109.79 A3.0 3.0 0 1 1 1399.61 109.79 L1397.06 122.41 A3.0 3.0 0 1 0 1402.94 122.41 L1400.39 109.79 A3.0 3.0 0 1 1 1406.27 109.79 L1403.73 122.41 A3.0 3.0 0 1 0 1409.61 122.41 L1407.06 109.79 A3.0 3.0 0 1 1 1412.94 109.79 L1410.39 122.41 A3.0 3.0 0 1 0 1416.27 122.41 L1413.73 109.79 A3.0 3.0 0 1 1 1419.61 109.79 L1417.06 122.41 A3.0 3.0 0 1 0 1422.94 122.41 L1420.39 109.79 A3.0 3.0 0 1 1 1426.27 109.79 L1423.73 122.41 A3.0 3.0 0 1 0 1429.61 122.41 L1427.06 109.79 A3.0 3.0 0 1 1 1432.94 109.79 L1430.39 122.41 A3.0 3.0 0 1 0 1436.27 122.41 L1433.73 109.79 A3.0 3.0 0 1 1 1439.61 109.79 L1437.06 122.41 A3.0 3.0 0 1 0 1442.94 122.41 L1440.39 109.79 A3.0 3.0 0 1 1 1446.27 109.79 L1443.73 122.41 A3.0 3.0 0 1 0 1449.61 122.41 L1447.06 109.79 A3.0 3.0 0 1 1 1452.94 109.79 L1450.39 122.41 A3.0 3.0 0 1 0 1456.27 122.41 L1453.73 109.79 A3.0 3.0 0 1 1 1459.61 109.79 L1457.06 122.41 A3.0 3.0 0 1 0 1462.94 122.41 L1460.39 109.79 A3.0 3.0 0 1 1 1466.27 109.79 L1463.73 122.41 A3.0 3.0 0 1 0 1469.61 122.41 L1467.06 109.79 A3.0 3.0 0 1 1 1472.94 109.79 L1470.39 122.41 A3.0 3.0 0 1 0 1476.27 122.41 L1473.73 109.79 A3.0 3.0 0 1 1 1479.61 109.79 L1477.06 122.41 A3.0 3.0 0 1 0 1482.94 122.41 L1480.39 109.79 A3.0 3.0 0 1 1 1486.27 109.79 L1483.73 122.41 A3.0 3.0 0 1 0 1489.61 122.41 L1487.06 109.79 A3.0 3.0 0 1 1 1492.94 109.79 L1490.39 122.41 A3.0 3.0 0 1 0 1496.27 122.41 L1493.73 109.79 A3.0 3.0 0 1 1 1499.61 109.79 L1497.06 122.41 A3.0 3.0 0 1 0 1502.94 122.41 L1500.39 109.79 A3.0 3.0 0 1 1 1506.27 109.79 L1503.73 122.41 A3.0 3.0 0 1 0 1509.61 122.41 L1507.06 109.79 A3.0 3.0 0 1 1 1512.94 109.79 L1510.39 122.41 A3.0 3.0 0 1 0 1516.27 122.41 L1513.73 109.79 A3.0 3.0 0 1 1 1519.61 109.79 L1517.06 122.41 A3.0 3.0 0 1 0 1522.94 122.41 L1520.39 109.79 A3.0 3.0 0 1 1 1526.27 109.79 L1523.73 122.41 A3.0 3.0 0 1 0 1529.61 122.41 L1527.06 109.79 A3.0 3.0 0 1 1 1532.94 109.79 L1530.39 122.41 A3.0 3.0 0 1 0 1536.27 122.41 L1533.73 109.79 A3.0 3.0 0 1 1 1539.61 109.79 L1537.06 122.41 A3.0 3.0 0 1 0 1542.94 122.41 L1540.39 109.79 A3.0 3.0 0 1 1 1546.27 109.79 L1543.73 122.41 A3.0 3.0 0 1 0 1549.61 122.41 L1547.06 109.79 A3.0 3.0 0 1 1 1552.94 109.79 L1550.39 122.41 A3.0 3.0 0 1 0 1556.27 122.41 L1553.73 109.79 A3.0 3.0 0 1 1 1559.61 109.79 L1557.06 122.41 A3.0 3.0 0 1 0 1562.94 122.41 L1560.39 109.79 A3.0 3.0 0 1 1 1566.27 109.79 L1563.73 122.41 A3.0 3.0 0 1 0 1569.61 122.41 L1567.06 109.79 A3.0 3.0 0 1 1 1572.94 109.79 L1570.39 122.41 A3.0 3.0 0 1 0 1576.27 122.41 L1573.73 109.79 A3.0 3.0 0 1 1 1579.61 109.79 L1577.06 122.41 A3.0 3.0 0 1 0 1582.94 122.41 L1580.39 109.79 A3.0 3.0 0 1 1 1586.27 109.79 L1583.73 122.41 A3.0 3.0 0 1 0 1589.61 122.41 L1587.06 109.79 A3.0 3.0 0 1 1 1592.94 109.79 L1590.39 122.41 A3.0 3.0 0 1 0 1596.27 122.41 L1593.73 109.79 A3.0 3.0 0 1 1 1599.61 109.79 L1597.06 122.41 A3.0 3.0 0 1 0 1602.94 122.41 L1600.39 109.79 A3.0 3.0 0 1 1 1606.27 109.79 L1603.73 122.41 A3.0 3.0 0 1 0 1609.61 122.41 L1607.06 109.79 A3.0 3.0 0 1 1 1612.94 109.79 L1610.39 122.41 A3.0 3.0 0 1 0 1616.27 122.41 L1613.73 109.79 A3.0 3.0 0 1 1 1619.61 109.79 L1617.06 122.41 A3.0 3.0 0 1 0 1622.94 122.41 L1620.39 109.79 A3.0 3.0 0 1 1 1626.27 109.79 L1623.73 122.41 A3.0 3.0 0 1 0 1629.61 122.41 L1627.06 109.79 A3.0 3.0 0 1 1 1632.94 109.79 L1630.39 122.41 A3.0 3.0 0 1 0 1636.27 122.41 L1633.73 109.79 A3.0 3.0 0 1 1 1639.61 109.79 L1637.06 122.41 A3.0 3.0 0 1 0 1642.94 122.41 L1640.39 109.79 A3.0 3.0 0 1 1 1646.27 109.79 L1643.73 122.41 A3.0 3.0 0 1 0 1649.61 122.41 L1647.06 109.79 A3.0 3.0 0 1 1 1652.94 109.79 L1650.39 122.41 A3.0 3.0 0 1 0 1656.27 122.41 L1653.73 109.79 A3.0 3.0 0 1 1 1659.61 109.79 L1657.06 122.41 A3.0 3.0 0 1 0 1662.94 122.41 L1660.39 109.79 A3.0 3.0 0 1 1 1666.27 109.79 L1663.73 122.41 A3.0 3.0 0 1 0 1669.61 122.41 L1667.06 109.79 A3.0 3.0 0 1 1 1672.94 109.79 L1670.39 122.41 A3.0 3.0 0 1 0 1676.27 122.41 L1673.73 109.79 A3.0 3.0 0 1 1 1679.61 109.79 L1677.06 122.41 A3.0 3.0 0 1 0 1682.94 122.41 L1680.39 109.79 A3.0 3.0 0 1 1 1686.27 109.79 L1683.73 122.41 A3.0 3.0 0 1 0 1689.61 122.41 L1687.06 109.79 A3.0 3.0 0 1 1 1692.94 109.79 L1690.39 122.41 A3.0 3.0 0 1 0 1696.27 122.41 L1693.73 109.79 A3.0 3.0 0 1 1 1699.61 109.79 L1697.06 122.41 A3.0 3.0 0 1 0 1702.94 122.41 L1700.39 109.79 A3.0 3.0 0 1 1 1706.27 109.79 L1703.73 122.41 A3.0 3.0 0 1 0 1709.61 122.41 L1707.06 109.79 A3.0 3.0 0 1 1 1712.94 109.79 L1710.39 122.41 A3.0 3.0 0 1 0 1716.27 122.41 L1713.73 109.79 A3.0 3.0 0 1 1 1719.61 109.79 L1717.06 122.41 A3.0 3.0 0 1 0 1722.94 122.41 L1720.39 109.79 A3.0 3.0 0 1 1 1726.27 109.79 L1723.73 122.41 A3.0 3.0 0 1 0 1729.61 122.41 L1727.06 109.79 A3.0 3.0 0 1 1 1732.94 109.79 L1730.39 122.41 A3.0 3.0 0 1 0 1736.27 122.41 L1733.73 109.79 A3.0 3.0 0 1 1 1739.61 109.79 L1737.06 122.41 A3.0 3.0 0 1 0 1742.94 122.41 L1740.39 109.79 A3.0 3.0 0 1 1 1746.27 109.79 L1743.73 122.41 A3.0 3.0 0 1 0 1749.61 122.41 L1747.06 109.79 A3.0 3.0 0 1 1 1752.94 109.79 L1750.39 122.41 A3.0 3.0 0 1 0 1756.27 122.41 L1753.73 109.79 A3.0 3.0 0 1 1 1759.61 109.79 L1757.06 122.41 A3.0 3.0 0 1 0 1762.94 122.41 L1760.39 109.79 A3.0 3.0 0 1 1 1766.27 109.79 L1763.73 122.41 A3.0 3.0 0 1 0 1769.61 122.41 L1767.06 109.79 A3.0 3.0 0 1 1 1772.94 109.79 L1770.39 122.41 A3.0 3.0 0 1 0 1776.27 122.41 L1773.73 109.79 A3.0 3.0 0 1 1 1779.61 109.79 L1777.06 122.41 A3.0 3.0 0 1 0 1782.94 122.41 L1780.39 109.79 A3.0 3.0 0 1 1 1786.27 109.79 L1783.73 122.41 A3.0 3.0 0 1 0 1789.61 122.41 L1787.06 109.79 A3.0 3.0 0 1 1 1792.94 109.79 L1790.39 122.41 A3.0 3.0 0 1 0 1796.27 122.41 L1793.73 109.79 A3.0 3.0 0 1 1 1799.61 109.79 L1797.06 122.41 A3.0 3.0 0 1 0 1802.94 122.41 L1800.39 109.79 A3.0 3.0 0 1 1 1806.27 109.79 L1803.73 122.41 A3.0 3.0 0 1 0 1809.61 122.41 L1807.06 109.79 A3.0 3.0 0 1 1 1812.94 109.79 L1810.39 122.41 A3.0 3.0 0 1 0 1816.27 122.41 L1813.73 109.79 A3.0 3.0 0 1 1 1819.61 109.79 L1817.06 122.41 A3.0 3.0 0 1 0 1822.94 122.41 L1820.39 109.79 A3.0 3.0 0 1 1 1826.27 109.79 L1823.73 122.41 A3.0 3.0 0 1 0 1829.61 122.41 L1827.06 109.79 A3.0 3.0 0 1 1 1832.94 109.79 L1830.39 122.41 A3.0 3.0 0 1 0 1836.27 122.41 L1833.73 109.79 A3.0 3.0 0 1 1 1839.61 109.79 L1837.06 122.41 A3.0 3.0 0 1 0 1842.94 122.41 L1840.39 109.79 A3.0 3.0 0 1 1 1846.27 109.79 L1843.73 122.41 A3.0 3.0 0 1 0 1849.61 122.41 L1847.06 109.79" fill="none" stroke="#5e5e48" stroke-width="1.0" /></g><g clip-path="url(#cl3)"><path d="M1018.81 158.68 A25.2 25.2 0 1 1 1067.86 158.68 L1045.47 253.62 A25.2 25.2 0 1 0 1094.53 253.62 L1072.14 158.68 A25.2 25.2 0 1 1 1121.19 158.68 L1098.81 253.62 A25.2 25.2 0 1 0 1147.86 253.62 L1125.47 158.68 A25.2 25.2 0 1 1 1174.53 158.68 L1152.14 253.62 A25.2 25.2 0 1 0 1201.19 253.62 L1178.81 158.68 A25.2 25.2 0 1 1 1227.86 158.68 L1205.47 253.62 A25.2 25.2 0 1 0 1254.53 253.62 L1232.14 158.68 A25.2 25.2 0 1 1 1281.19 158.68 L1258.81 253.62 A25.2 25.2 0 1 0 1307.86 253.62 L1285.47 158.68 A25.2 25.2 0 1 1 1334.53 158.68 L1312.14 253.62 A25.2 25.2 0 1 0 1361.19 253.62 L1338.81 158.68 A25.2 25.2 0 1 1 1387.86 158.68 L1365.47 253.62 A25.2 25.2 0 1 0 1414.53 253.62 L1392.14 158.68 A25.2 25.2 0 1 1 1441.19 158.68 L1418.81 253.62 A25.2 25.2 0 1 0 1467.86 253.62 L1445.47 158.68 A25.2 25.2 0 1 1 1494.53 158.68 L1472.14 253.62 A25.2 25.2 0 1 0 1521.19 253.62 L1498.81 158.68 A25.2 25.2 0 1 1 1547.86 158.68 L1525.47 253.62 A25.2 25.2 0 1 0 1574.53 253.62 L1552.14 158.68 A25.2 25.2 0 1 1 1601.19 158.68 L1578.81 253.62 A25.2 25.2 0 1 0 1627.86 253.62 L1605.47 158.68 A25.2 25.2 0 1 1 1654.53 158.68 L1632.14 253.62 A25.2 25.2 0 1 0 1681.19 253.62 L1658.81 158.68 A25.2 25.2 0 1 1 1707.86 158.68 L1685.47 253.62 A25.2 25.2 0 1 0 1734.53 253.62 L1712.14 158.68 A25.2 25.2 0 1 1 1761.19 158.68 L1738.81 253.62 A25.2 25.2 0 1 0 1787.86 253.62 L1765.47 158.68 A25.2 25.2 0 1 1 1814.53 158.68 L1792.14 253.62 A25.2 25.2 0 1 0 1841.19 253.62 L1818.81 158.68 A25.2 25.2 0 1 1 1867.86 158.68 L1845.47 253.62 A25.2 25.2 0 1 0 1894.53 253.62 L1872.14 158.68" fill="none" stroke="#5a5a4a" stroke-width="0.9" /></g><g clip-path="url(#cl2)"><path d="M1133.73 289.79 A3.0 3.0 0 1 1 1139.61 289.79 L1137.06 302.41 A3.0 3.0 0 1 0 1142.94 302.41 L1140.39 289.79 A3.0 3.0 0 1 1 1146.27 289.79 L1143.73 302.41 A3.0 3.0 0 1 0 1149.61 302.41 L1147.06 289.79 A3.0 3.0 0 1 1 1152.94 289.79 L1150.39 302.41 A3.0 3.0 0 1 0 1156.27 302.41 L1153.73 289.79 A3.0 3.0 0 1 1 1159.61 289.79 L1157.06 302.41 A3.0 3.0 0 1 0 1162.94 302.41 L1160.39 289.79 A3.0 3.0 0 1 1 1166.27 289.79 L1163.73 302.41 A3.0 3.0 0 1 0 1169.61 302.41 L1167.06 289.79 A3.0 3.0 0 1 1 1172.94 289.79 L1170.39 302.41 A3.0 3.0 0 1 0 1176.27 302.41 L1173.73 289.79 A3.0 3.0 0 1 1 1179.61 289.79 L1177.06 302.41 A3.0 3.0 0 1 0 1182.94 302.41 L1180.39 289.79 A3.0 3.0 0 1 1 1186.27 289.79 L1183.73 302.41 A3.0 3.0 0 1 0 1189.61 302.41 L1187.06 289.79 A3.0 3.0 0 1 1 1192.94 289.79 L1190.39 302.41 A3.0 3.0 0 1 0 1196.27 302.41 L1193.73 289.79 A3.0 3.0 0 1 1 1199.61 289.79 L1197.06 302.41 A3.0 3.0 0 1 0 1202.94 302.41 L1200.39 289.79 A3.0 3.0 0 1 1 1206.27 289.79 L1203.73 302.41 A3.0 3.0 0 1 0 1209.61 302.41 L1207.06 289.79 A3.0 3.0 0 1 1 1212.94 289.79 L1210.39 302.41 A3.0 3.0 0 1 0 1216.27 302.41 L1213.73 289.79 A3.0 3.0 0 1 1 1219.61 289.79 L1217.06 302.41 A3.0 3.0 0 1 0 1222.94 302.41 L1220.39 289.79 A3.0 3.0 0 1 1 1226.27 289.79 L1223.73 302.41 A3.0 3.0 0 1 0 1229.61 302.41 L1227.06 289.79 A3.0 3.0 0 1 1 1232.94 289.79 L1230.39 302.41 A3.0 3.0 0 1 0 1236.27 302.41 L1233.73 289.79 A3.0 3.0 0 1 1 1239.61 289.79 L1237.06 302.41 A3.0 3.0 0 1 0 1242.94 302.41 L1240.39 289.79 A3.0 3.0 0 1 1 1246.27 289.79 L1243.73 302.41 A3.0 3.0 0 1 0 1249.61 302.41 L1247.06 289.79 A3.0 3.0 0 1 1 1252.94 289.79 L1250.39 302.41 A3.0 3.0 0 1 0 1256.27 302.41 L1253.73 289.79 A3.0 3.0 0 1 1 1259.61 289.79 L1257.06 302.41 A3.0 3.0 0 1 0 1262.94 302.41 L1260.39 289.79 A3.0 3.0 0 1 1 1266.27 289.79 L1263.73 302.41 A3.0 3.0 0 1 0 1269.61 302.41 L1267.06 289.79 A3.0 3.0 0 1 1 1272.94 289.79 L1270.39 302.41 A3.0 3.0 0 1 0 1276.27 302.41 L1273.73 289.79 A3.0 3.0 0 1 1 1279.61 289.79 L1277.06 302.41 A3.0 3.0 0 1 0 1282.94 302.41 L1280.39 289.79 A3.0 3.0 0 1 1 1286.27 289.79 L1283.73 302.41 A3.0 3.0 0 1 0 1289.61 302.41 L1287.06 289.79 A3.0 3.0 0 1 1 1292.94 289.79 L1290.39 302.41 A3.0 3.0 0 1 0 1296.27 302.41 L1293.73 289.79 A3.0 3.0 0 1 1 1299.61 289.79 L1297.06 302.41 A3.0 3.0 0 1 0 1302.94 302.41 L1300.39 289.79 A3.0 3.0 0 1 1 1306.27 289.79 L1303.73 302.41 A3.0 3.0 0 1 0 1309.61 302.41 L1307.06 289.79 A3.0 3.0 0 1 1 1312.94 289.79 L1310.39 302.41 A3.0 3.0 0 1 0 1316.27 302.41 L1313.73 289.79 A3.0 3.0 0 1 1 1319.61 289.79 L1317.06 302.41 A3.0 3.0 0 1 0 1322.94 302.41 L1320.39 289.79 A3.0 3.0 0 1 1 1326.27 289.79 L1323.73 302.41 A3.0 3.0 0 1 0 1329.61 302.41 L1327.06 289.79 A3.0 3.0 0 1 1 1332.94 289.79 L1330.39 302.41 A3.0 3.0 0 1 0 1336.27 302.41 L1333.73 289.79 A3.0 3.0 0 1 1 1339.61 289.79 L1337.06 302.41 A3.0 3.0 0 1 0 1342.94 302.41 L1340.39 289.79 A3.0 3.0 0 1 1 1346.27 289.79 L1343.73 302.41 A3.0 3.0 0 1 0 1349.61 302.41 L1347.06 289.79 A3.0 3.0 0 1 1 1352.94 289.79 L1350.39 302.41 A3.0 3.0 0 1 0 1356.27 302.41 L1353.73 289.79 A3.0 3.0 0 1 1 1359.61 289.79 L1357.06 302.41 A3.0 3.0 0 1 0 1362.94 302.41 L1360.39 289.79 A3.0 3.0 0 1 1 1366.27 289.79 L1363.73 302.41 A3.0 3.0 0 1 0 1369.61 302.41 L1367.06 289.79 A3.0 3.0 0 1 1 1372.94 289.79 L1370.39 302.41 A3.0 3.0 0 1 0 1376.27 302.41 L1373.73 289.79 A3.0 3.0 0 1 1 1379.61 289.79 L1377.06 302.41 A3.0 3.0 0 1 0 1382.94 302.41 L1380.39 289.79 A3.0 3.0 0 1 1 1386.27 289.79 L1383.73 302.41 A3.0 3.0 0 1 0 1389.61 302.41 L1387.06 289.79 A3.0 3.0 0 1 1 1392.94 289.79 L1390.39 302.41 A3.0 3.0 0 1 0 1396.27 302.41 L1393.73 289.79 A3.0 3.0 0 1 1 1399.61 289.79 L1397.06 302.41 A3.0 3.0 0 1 0 1402.94 302.41 L1400.39 289.79 A3.0 3.0 0 1 1 1406.27 289.79 L1403.73 302.41 A3.0 3.0 0 1 0 1409.61 302.41 L1407.06 289.79 A3.0 3.0 0 1 1 1412.94 289.79 L1410.39 302.41 A3.0 3.0 0 1 0 1416.27 302.41 L1413.73 289.79 A3.0 3.0 0 1 1 1419.61 289.79 L1417.06 302.41 A3.0 3.0 0 1 0 1422.94 302.41 L1420.39 289.79 A3.0 3.0 0 1 1 1426.27 289.79 L1423.73 302.41 A3.0 3.0 0 1 0 1429.61 302.41 L1427.06 289.79 A3.0 3.0 0 1 1 1432.94 289.79 L1430.39 302.41 A3.0 3.0 0 1 0 1436.27 302.41 L1433.73 289.79 A3.0 3.0 0 1 1 1439.61 289.79 L1437.06 302.41 A3.0 3.0 0 1 0 1442.94 302.41 L1440.39 289.79 A3.0 3.0 0 1 1 1446.27 289.79 L1443.73 302.41 A3.0 3.0 0 1 0 1449.61 302.41 L1447.06 289.79 A3.0 3.0 0 1 1 1452.94 289.79 L1450.39 302.41 A3.0 3.0 0 1 0 1456.27 302.41 L1453.73 289.79 A3.0 3.0 0 1 1 1459.61 289.79 L1457.06 302.41 A3.0 3.0 0 1 0 1462.94 302.41 L1460.39 289.79 A3.0 3.0 0 1 1 1466.27 289.79 L1463.73 302.41 A3.0 3.0 0 1 0 1469.61 302.41 L1467.06 289.79 A3.0 3.0 0 1 1 1472.94 289.79 L1470.39 302.41 A3.0 3.0 0 1 0 1476.27 302.41 L1473.73 289.79 A3.0 3.0 0 1 1 1479.61 289.79 L1477.06 302.41 A3.0 3.0 0 1 0 1482.94 302.41 L1480.39 289.79 A3.0 3.0 0 1 1 1486.27 289.79 L1483.73 302.41 A3.0 3.0 0 1 0 1489.61 302.41 L1487.06 289.79 A3.0 3.0 0 1 1 1492.94 289.79 L1490.39 302.41 A3.0 3.0 0 1 0 1496.27 302.41 L1493.73 289.79 A3.0 3.0 0 1 1 1499.61 289.79 L1497.06 302.41 A3.0 3.0 0 1 0 1502.94 302.41 L1500.39 289.79 A3.0 3.0 0 1 1 1506.27 289.79 L1503.73 302.41 A3.0 3.0 0 1 0 1509.61 302.41 L1507.06 289.79 A3.0 3.0 0 1 1 1512.94 289.79 L1510.39 302.41 A3.0 3.0 0 1 0 1516.27 302.41 L1513.73 289.79 A3.0 3.0 0 1 1 1519.61 289.79 L1517.06 302.41 A3.0 3.0 0 1 0 1522.94 302.41 L1520.39 289.79 A3.0 3.0 0 1 1 1526.27 289.79 L1523.73 302.41 A3.0 3.0 0 1 0 1529.61 302.41 L1527.06 289.79 A3.0 3.0 0 1 1 1532.94 289.79 L1530.39 302.41 A3.0 3.0 0 1 0 1536.27 302.41 L1533.73 289.79 A3.0 3.0 0 1 1 1539.61 289.79 L1537.06 302.41 A3.0 3.0 0 1 0 1542.94 302.41 L1540.39 289.79 A3.0 3.0 0 1 1 1546.27 289.79 L1543.73 302.41 A3.0 3.0 0 1 0 1549.61 302.41 L1547.06 289.79 A3.0 3.0 0 1 1 1552.94 289.79 L1550.39 302.41 A3.0 3.0 0 1 0 1556.27 302.41 L1553.73 289.79 A3.0 3.0 0 1 1 1559.61 289.79 L1557.06 302.41 A3.0 3.0 0 1 0 1562.94 302.41 L1560.39 289.79 A3.0 3.0 0 1 1 1566.27 289.79 L1563.73 302.41 A3.0 3.0 0 1 0 1569.61 302.41 L1567.06 289.79 A3.0 3.0 0 1 1 1572.94 289.79 L1570.39 302.41 A3.0 3.0 0 1 0 1576.27 302.41 L1573.73 289.79 A3.0 3.0 0 1 1 1579.61 289.79 L1577.06 302.41 A3.0 3.0 0 1 0 1582.94 302.41 L1580.39 289.79 A3.0 3.0 0 1 1 1586.27 289.79 L1583.73 302.41 A3.0 3.0 0 1 0 1589.61 302.41 L1587.06 289.79 A3.0 3.0 0 1 1 1592.94 289.79 L1590.39 302.41 A3.0 3.0 0 1 0 1596.27 302.41 L1593.73 289.79 A3.0 3.0 0 1 1 1599.61 289.79 L1597.06 302.41 A3.0 3.0 0 1 0 1602.94 302.41 L1600.39 289.79 A3.0 3.0 0 1 1 1606.27 289.79 L1603.73 302.41 A3.0 3.0 0 1 0 1609.61 302.41 L1607.06 289.79 A3.0 3.0 0 1 1 1612.94 289.79 L1610.39 302.41 A3.0 3.0 0 1 0 1616.27 302.41 L1613.73 289.79 A3.0 3.0 0 1 1 1619.61 289.79 L1617.06 302.41 A3.0 3.0 0 1 0 1622.94 302.41 L1620.39 289.79 A3.0 3.0 0 1 1 1626.27 289.79 L1623.73 302.41 A3.0 3.0 0 1 0 1629.61 302.41 L1627.06 289.79 A3.0 3.0 0 1 1 1632.94 289.79 L1630.39 302.41 A3.0 3.0 0 1 0 1636.27 302.41 L1633.73 289.79 A3.0 3.0 0 1 1 1639.61 289.79 L1637.06 302.41 A3.0 3.0 0 1 0 1642.94 302.41 L1640.39 289.79 A3.0 3.0 0 1 1 1646.27 289.79 L1643.73 302.41 A3.0 3.0 0 1 0 1649.61 302.41 L1647.06 289.79 A3.0 3.0 0 1 1 1652.94 289.79 L1650.39 302.41 A3.0 3.0 0 1 0 1656.27 302.41 L1653.73 289.79 A3.0 3.0 0 1 1 1659.61 289.79 L1657.06 302.41 A3.0 3.0 0 1 0 1662.94 302.41 L1660.39 289.79 A3.0 3.0 0 1 1 1666.27 289.79 L1663.73 302.41 A3.0 3.0 0 1 0 1669.61 302.41 L1667.06 289.79 A3.0 3.0 0 1 1 1672.94 289.79 L1670.39 302.41 A3.0 3.0 0 1 0 1676.27 302.41 L1673.73 289.79 A3.0 3.0 0 1 1 1679.61 289.79 L1677.06 302.41 A3.0 3.0 0 1 0 1682.94 302.41 L1680.39 289.79 A3.0 3.0 0 1 1 1686.27 289.79 L1683.73 302.41 A3.0 3.0 0 1 0 1689.61 302.41 L1687.06 289.79 A3.0 3.0 0 1 1 1692.94 289.79 L1690.39 302.41 A3.0 3.0 0 1 0 1696.27 302.41 L1693.73 289.79 A3.0 3.0 0 1 1 1699.61 289.79 L1697.06 302.41 A3.0 3.0 0 1 0 1702.94 302.41 L1700.39 289.79 A3.0 3.0 0 1 1 1706.27 289.79 L1703.73 302.41 A3.0 3.0 0 1 0 1709.61 302.41 L1707.06 289.79 A3.0 3.0 0 1 1 1712.94 289.79 L1710.39 302.41 A3.0 3.0 0 1 0 1716.27 302.41 L1713.73 289.79 A3.0 3.0 0 1 1 1719.61 289.79 L1717.06 302.41 A3.0 3.0 0 1 0 1722.94 302.41 L1720.39 289.79 A3.0 3.0 0 1 1 1726.27 289.79 L1723.73 302.41 A3.0 3.0 0 1 0 1729.61 302.41 L1727.06 289.79 A3.0 3.0 0 1 1 1732.94 289.79 L1730.39 302.41 A3.0 3.0 0 1 0 1736.27 302.41 L1733.73 289.79 A3.0 3.0 0 1 1 1739.61 289.79 L1737.06 302.41 A3.0 3.0 0 1 0 1742.94 302.41 L1740.39 289.79 A3.0 3.0 0 1 1 1746.27 289.79 L1743.73 302.41 A3.0 3.0 0 1 0 1749.61 302.41 L1747.06 289.79 A3.0 3.0 0 1 1 1752.94 289.79 L1750.39 302.41 A3.0 3.0 0 1 0 1756.27 302.41 L1753.73 289.79 A3.0 3.0 0 1 1 1759.61 289.79 L1757.06 302.41 A3.0 3.0 0 1 0 1762.94 302.41 L1760.39 289.79 A3.0 3.0 0 1 1 1766.27 289.79 L1763.73 302.41 A3.0 3.0 0 1 0 1769.61 302.41 L1767.06 289.79 A3.0 3.0 0 1 1 1772.94 289.79 L1770.39 302.41 A3.0 3.0 0 1 0 1776.27 302.41 L1773.73 289.79 A3.0 3.0 0 1 1 1779.61 289.79 L1777.06 302.41 A3.0 3.0 0 1 0 1782.94 302.41 L1780.39 289.79 A3.0 3.0 0 1 1 1786.27 289.79 L1783.73 302.41 A3.0 3.0 0 1 0 1789.61 302.41 L1787.06 289.79 A3.0 3.0 0 1 1 1792.94 289.79 L1790.39 302.41 A3.0 3.0 0 1 0 1796.27 302.41 L1793.73 289.79 A3.0 3.0 0 1 1 1799.61 289.79 L1797.06 302.41 A3.0 3.0 0 1 0 1802.94 302.41 L1800.39 289.79 A3.0 3.0 0 1 1 1806.27 289.79 L1803.73 302.41 A3.0 3.0 0 1 0 1809.61 302.41 L1807.06 289.79 A3.0 3.0 0 1 1 1812.94 289.79 L1810.39 302.41 A3.0 3.0 0 1 0 1816.27 302.41 L1813.73 289.79 A3.0 3.0 0 1 1 1819.61 289.79 L1817.06 302.41 A3.0 3.0 0 1 0 1822.94 302.41 L1820.39 289.79 A3.0 3.0 0 1 1 1826.27 289.79 L1823.73 302.41 A3.0 3.0 0 1 0 1829.61 302.41 L1827.06 289.79 A3.0 3.0 0 1 1 1832.94 289.79 L1830.39 302.41 A3.0 3.0 0 1 0 1836.27 302.41 L1833.73 289.79 A3.0 3.0 0 1 1 1839.61 289.79 L1837.06 302.41 A3.0 3.0 0 1 0 1842.94 302.41 L1840.39 289.79 A3.0 3.0 0 1 1 1846.27 289.79 L1843.73 302.41 A3.0 3.0 0 1 0 1849.61 302.41 L1847.06 289.79" fill="none" stroke="#5e5e48" stroke-width="1.0" /></g><rect x="1219.3" y="126" width="37.5" height="160" fill="#cfa98a" stroke="#8a7260" stroke-width="1"/><g clip-path="url(#st0)" fill="none" stroke="#7a6652" stroke-width="0.95"><ellipse cx="1221.7" cy="205.6" rx="11.0" ry="11.6"/><ellipse cx="1221.7" cy="205.6" rx="20.3" ry="21.4"/><ellipse cx="1221.7" cy="205.6" rx="29.6" ry="31.2"/><ellipse cx="1221.7" cy="205.6" rx="38.9" ry="41.0"/><ellipse cx="1221.7" cy="205.6" rx="48.3" ry="50.8"/><ellipse cx="1221.7" cy="205.6" rx="57.6" ry="60.6"/><ellipse cx="1221.7" cy="205.6" rx="66.9" ry="70.4"/><ellipse cx="1221.7" cy="205.6" rx="76.2" ry="80.2"/><ellipse cx="1221.7" cy="205.6" rx="85.5" ry="90.0"/></g><circle cx="1221.7" cy="205.6" r="2" fill="none" stroke="#7a6652" stroke-width="0.95"/><rect x="1735.3" y="126" width="37.5" height="160" fill="#cfa98a" stroke="#8a7260" stroke-width="1"/><g clip-path="url(#st1)" fill="none" stroke="#7a6652" stroke-width="0.95"><ellipse cx="1737.7" cy="205.6" rx="11.0" ry="11.6"/><ellipse cx="1737.7" cy="205.6" rx="20.3" ry="21.4"/><ellipse cx="1737.7" cy="205.6" rx="29.6" ry="31.2"/><ellipse cx="1737.7" cy="205.6" rx="38.9" ry="41.0"/><ellipse cx="1737.7" cy="205.6" rx="48.3" ry="50.8"/><ellipse cx="1737.7" cy="205.6" rx="57.6" ry="60.6"/><ellipse cx="1737.7" cy="205.6" rx="66.9" ry="70.4"/><ellipse cx="1737.7" cy="205.6" rx="76.2" ry="80.2"/><ellipse cx="1737.7" cy="205.6" rx="85.5" ry="90.0"/></g><circle cx="1737.7" cy="205.6" r="2" fill="none" stroke="#7a6652" stroke-width="0.95"/><rect x="1150" y="306.5" width="692.5" height="9.5" fill="#dcdcdc"/><rect x="1150" y="306" width="692.5" height="1" fill="#8c8c8c"/><rect x="1150" y="315" width="692.5" height="1.5" fill="#707070"/><rect x="1376.0" y="308.4" width="2" height="2" fill="none" stroke="#b8b8b8" stroke-width="0.6"/><rect x="1599.3" y="307.9" width="2" height="2" fill="none" stroke="#b8b8b8" stroke-width="0.6"/><rect x="1520.7" y="309.7" width="2" height="2" fill="none" stroke="#b8b8b8" stroke-width="0.6"/><rect x="1194.6" y="310.5" width="2" height="2" fill="none" stroke="#b8b8b8" stroke-width="0.6"/><rect x="1180.6" y="310.1" width="2" height="2" fill="none" stroke="#b8b8b8" stroke-width="0.6"/><rect x="1202.7" y="308.0" width="2" height="2" fill="none" stroke="#b8b8b8" stroke-width="0.6"/><rect x="1444.7" y="312.5" width="2" height="2" fill="none" stroke="#b8b8b8" stroke-width="0.6"/><rect x="1239.5" y="308.8" width="2" height="2" fill="none" stroke="#b8b8b8" stroke-width="0.6"/><rect x="1583.2" y="313.2" width="2" height="2" fill="none" stroke="#b8b8b8" stroke-width="0.6"/><rect x="1548.9" y="309.9" width="2" height="2" fill="none" stroke="#b8b8b8" stroke-width="0.6"/><rect x="1821.3" y="307.8" width="2" height="2" fill="none" stroke="#b8b8b8" stroke-width="0.6"/><rect x="1740.9" y="309.2" width="2" height="2" fill="none" stroke="#b8b8b8" stroke-width="0.6"/><rect x="1253.5" y="308.2" width="2" height="2" fill="none" stroke="#b8b8b8" stroke-width="0.6"/><rect x="1365.5" y="312.4" width="2" height="2" fill="none" stroke="#b8b8b8" stroke-width="0.6"/><rect x="1278.3" y="311.0" width="2" height="2" fill="none" stroke="#b8b8b8" stroke-width="0.6"/><rect x="1591.1" y="309.7" width="2" height="2" fill="none" stroke="#b8b8b8" stroke-width="0.6"/><rect x="1528.8" y="307.9" width="2" height="2" fill="none" stroke="#b8b8b8" stroke-width="0.6"/><rect x="1195.7" y="308.7" width="2" height="2" fill="none" stroke="#b8b8b8" stroke-width="0.6"/><rect x="1619.4" y="310.1" width="2" height="2" fill="none" stroke="#b8b8b8" stroke-width="0.6"/><rect x="1369.4" y="311.0" width="2" height="2" fill="none" stroke="#b8b8b8" stroke-width="0.6"/><rect x="1464.3" y="309.3" width="2" height="2" fill="none" stroke="#b8b8b8" stroke-width="0.6"/><rect x="1697.2" y="311.7" width="2" height="2" fill="none" stroke="#b8b8b8" stroke-width="0.6"/><rect x="1321.6" y="310.9" width="2" height="2" fill="none" stroke="#b8b8b8" stroke-width="0.6"/><rect x="1513.4" y="312.8" width="2" height="2" fill="none" stroke="#b8b8b8" stroke-width="0.6"/><rect x="1652.8" y="309.2" width="2" height="2" fill="none" stroke="#b8b8b8" stroke-width="0.6"/><rect x="1824.0" y="308.2" width="2" height="2" fill="none" stroke="#b8b8b8" stroke-width="0.6"/><rect x="1440.4" y="312.0" width="2" height="2" fill="none" stroke="#b8b8b8" stroke-width="0.6"/><rect x="1258.7" y="310.4" width="2" height="2" fill="none" stroke="#b8b8b8" stroke-width="0.6"/><rect x="1181.8" y="311.5" width="2" height="2" fill="none" stroke="#b8b8b8" stroke-width="0.6"/><rect x="1676.8" y="310.9" width="2" height="2" fill="none" stroke="#b8b8b8" stroke-width="0.6"/><rect x="1752.5" y="309.4" width="2" height="2" fill="none" stroke="#b8b8b8" stroke-width="0.6"/><rect x="1629.5" y="311.1" width="2" height="2" fill="none" stroke="#b8b8b8" stroke-width="0.6"/><rect x="1550.8" y="310.2" width="2" height="2" fill="none" stroke="#b8b8b8" stroke-width="0.6"/><rect x="1728.3" y="313.2" width="2" height="2" fill="none" stroke="#b8b8b8" stroke-width="0.6"/><rect x="1478.6" y="311.5" width="2" height="2" fill="none" stroke="#b8b8b8" stroke-width="0.6"/><rect x="1196.4" y="311.7" width="2" height="2" fill="none" stroke="#b8b8b8" stroke-width="0.6"/><rect x="1596.7" y="313.5" width="2" height="2" fill="none" stroke="#b8b8b8" stroke-width="0.6"/><rect x="1716.0" y="309.2" width="2" height="2" fill="none" stroke="#b8b8b8" stroke-width="0.6"/><rect x="1418.3" y="311.5" width="2" height="2" fill="none" stroke="#b8b8b8" stroke-width="0.6"/><rect x="1170.4" y="310.3" width="2" height="2" fill="none" stroke="#b8b8b8" stroke-width="0.6"/><g stroke="#6a6a6a" stroke-width="1.2"><path d="M1090 98V316"/><path d="M1082.5 98.5H1098"/><path d="M1082.5 106.5H1098"/><path d="M1082.5 126.5H1098"/><path d="M1082.5 286H1098"/><path d="M1082.5 306H1098"/><path d="M1082.5 316H1098"/></g><g stroke="#555" stroke-width="1.1"><path d="M1219.5 360.2H1735.5"/><path d="M1219.5 353V368M1256.5 353V368M1735.5 353V368"/></g><g><circle cx="1094.5" cy="361.5" r="12" fill="none" stroke="#444" stroke-width="3"/><path d="M1102.5 369.5L1114.5 381.5" stroke="#444" stroke-width="5.5"/><path d="M1088.5 361.7H1100.5M1094.5 355.5V367.5" stroke="#444" stroke-width="3"/></g><circle cx="1526" cy="102" r="14.3" fill="#fff" stroke="#111" stroke-width="1.5"/><circle cx="1496" cy="116.5" r="14.3" fill="#fff" stroke="#111" stroke-width="1.5"/><circle cx="1496" cy="206" r="14.3" fill="#fff" stroke="#111" stroke-width="1.5"/><circle cx="1496" cy="295.5" r="14.3" fill="#fff" stroke="#111" stroke-width="1.5"/><circle cx="1466" cy="310.5" r="14.3" fill="#fff" stroke="#111" stroke-width="1.5"/></svg>
<div style="position:absolute;left:1032px;top:197px;width:80px;height:20px;transform:rotate(-90deg);transform-origin:40px 10px;font-size:20px;line-height:20px;color:#888;text-align:center">272,5</div>
<div style="position:absolute;left:0;top:654px;width:1885px;height:1px;background:#222"></div>
<div style="position:absolute;left:0;top:655px;width:1885px;height:208px;background:linear-gradient(#575757,#464646)"></div>
<svg style="position:absolute;left:0;top:675px" width="18" height="17"><path d="M-4 1H16L6.3 16Z" fill="#eee"/></svg>
<svg style="position:absolute;left:512px;top:670px" width="44" height="42" viewBox="512 670 44 42"><defs><mask id="wm" maskUnits="userSpaceOnUse" x="512" y="670" width="44" height="42"><rect x="512" y="670" width="44" height="42" fill="#fff"/><circle cx="524.3" cy="681.3" r="3.4" fill="#000"/><path d="M524.3 681.3 L516 673 L512 677 Z" fill="#000"/><path d="M524.3 681.3 L519 670 L530 670Z" fill="#000"/><path d="M524.3 681.3 L512 676 L512 688Z" fill="#000"/><circle cx="543.1" cy="699.9" r="1.1" fill="#000"/></mask></defs><g mask="url(#wm)" fill="#b3b3b3"><circle cx="528.3" cy="685.2" r="6.6"/><path d="M529 686 L543.1 699.9" stroke="#b3b3b3" stroke-width="6.4" stroke-linecap="round"/></g></svg>
<div style="position:absolute;left:202px;top:720px;width:346px;height:1px;background:#3d3d3d"></div><div style="position:absolute;left:202px;top:720px;width:1px;height:16px;background:#3d3d3d"></div><div style="position:absolute;left:203px;top:721px;width:39px;height:15px;background:linear-gradient(#b4da90 0,#b4da90 3px,#8cc75a 3px)"></div><div style="position:absolute;left:203px;top:736px;width:345px;height:1px;background:#7a7a7a"></div><div style="position:absolute;left:203px;top:737px;width:345px;height:1px;background:#3d3d3d"></div><div style="position:absolute;left:203px;top:738px;width:345px;height:3px;background:linear-gradient(90deg,#739e52 0,#739e52 85px,#b01e1e 86px)"></div><div style="position:absolute;left:203px;top:741px;width:345px;height:1px;background:#777"></div><div style="position:absolute;left:548px;top:721px;width:1px;height:21px;background:#7a7a7a"></div>
<div style="position:absolute;left:485.5px;top:747.5px;width:22px;height:22px;background:#cfcfcf;border:1px solid #bbb;box-sizing:border-box"></div>
<svg style="position:absolute;left:488px;top:752px" width="17" height="14"><path d="M2.2 2.2H14.5L8.35 13.3Z" fill="#444"/></svg>
<div style="position:absolute;left:202px;top:815px;width:346px;height:1px;background:#3d3d3d"></div><div style="position:absolute;left:202px;top:815px;width:1px;height:10px;background:#3d3d3d"></div><div style="position:absolute;left:203px;top:816px;width:81px;height:9px;background:linear-gradient(#b4da90 0,#b4da90 3px,#8cc75a 3px)"></div><div style="position:absolute;left:203px;top:825px;width:345px;height:1px;background:#7a7a7a"></div><div style="position:absolute;left:203px;top:826px;width:345px;height:1px;background:#3d3d3d"></div><div style="position:absolute;left:203px;top:827px;width:345px;height:3px;background:linear-gradient(90deg,#739e52 0%,#739e52 40%,#b3a21e 70%,#b01e1e 100%)"></div><div style="position:absolute;left:203px;top:830px;width:345px;height:1px;background:#777"></div><div style="position:absolute;left:548px;top:816px;width:1px;height:15px;background:#7a7a7a"></div>
<div style="position:absolute;left:580px;top:697px;width:347px;height:1px;background:#3d3d3d"></div><div style="position:absolute;left:580px;top:697px;width:1px;height:10px;background:#3d3d3d"></div><div style="position:absolute;left:581px;top:698px;width:3px;height:9px;background:linear-gradient(#b4da90 0,#b4da90 3px,#8cc75a 3px)"></div><div style="position:absolute;left:581px;top:707px;width:346px;height:1px;background:#7a7a7a"></div><div style="position:absolute;left:581px;top:708px;width:346px;height:1px;background:#3d3d3d"></div><div style="position:absolute;left:581px;top:709px;width:346px;height:3px;background:linear-gradient(90deg,#739e52 0%,#739e52 25%,#b3a21e 60%,#b01e1e 100%)"></div><div style="position:absolute;left:581px;top:712px;width:346px;height:1px;background:#777"></div><div style="position:absolute;left:927px;top:698px;width:1px;height:15px;background:#7a7a7a"></div>
<div style="position:absolute;left:580px;top:755px;width:347px;height:1px;background:#3d3d3d"></div><div style="position:absolute;left:580px;top:755px;width:1px;height:10px;background:#3d3d3d"></div><div style="position:absolute;left:581px;top:756px;width:3px;height:9px;background:linear-gradient(#b4da90 0,#b4da90 3px,#8cc75a 3px)"></div><div style="position:absolute;left:581px;top:765px;width:346px;height:1px;background:#7a7a7a"></div><div style="position:absolute;left:581px;top:766px;width:346px;height:1px;background:#3d3d3d"></div><div style="position:absolute;left:581px;top:767px;width:346px;height:3px;background:linear-gradient(90deg,#739e52 0%,#739e52 20%,#b3a21e 30%,#b01e1e 50%,#b01e1e 100%)"></div><div style="position:absolute;left:581px;top:770px;width:346px;height:1px;background:#777"></div><div style="position:absolute;left:927px;top:756px;width:1px;height:15px;background:#7a7a7a"></div>
<div style="position:absolute;left:580px;top:813px;width:347px;height:1px;background:#3d3d3d"></div><div style="position:absolute;left:580px;top:813px;width:1px;height:10px;background:#3d3d3d"></div><div style="position:absolute;left:581px;top:814px;width:3px;height:9px;background:linear-gradient(#b4da90 0,#b4da90 3px,#8cc75a 3px)"></div><div style="position:absolute;left:581px;top:823px;width:346px;height:1px;background:#7a7a7a"></div><div style="position:absolute;left:581px;top:824px;width:346px;height:1px;background:#3d3d3d"></div><div style="position:absolute;left:581px;top:825px;width:346px;height:3px;background:linear-gradient(90deg,#739e52 0%,#739e52 30%,#b3a21e 45%,#b3a21e 75%,#b01e1e 100%)"></div><div style="position:absolute;left:581px;top:828px;width:346px;height:1px;background:#777"></div><div style="position:absolute;left:927px;top:814px;width:1px;height:15px;background:#7a7a7a"></div>
<div style="position:absolute;left:958px;top:754px;width:347px;height:1px;background:#3d3d3d"></div><div style="position:absolute;left:958px;top:754px;width:1px;height:10px;background:#3d3d3d"></div><div style="position:absolute;left:959px;top:755px;width:124px;height:9px;background:linear-gradient(#b4da90 0,#b4da90 3px,#8cc75a 3px)"></div><div style="position:absolute;left:959px;top:764px;width:346px;height:1px;background:#7a7a7a"></div><div style="position:absolute;left:959px;top:765px;width:346px;height:1px;background:#3d3d3d"></div><div style="position:absolute;left:959px;top:766px;width:346px;height:3px;background:linear-gradient(90deg,#b01e1e 0%,#b01e1e 15%,#b3a21e 30%,#739e52 40%,#739e52 100%)"></div><div style="position:absolute;left:959px;top:769px;width:346px;height:1px;background:#777"></div><div style="position:absolute;left:1305px;top:755px;width:1px;height:15px;background:#7a7a7a"></div>
<div style="position:absolute;left:958px;top:812px;width:347px;height:1px;background:#3d3d3d"></div><div style="position:absolute;left:958px;top:812px;width:1px;height:10px;background:#3d3d3d"></div><div style="position:absolute;left:959px;top:813px;width:7px;height:9px;background:linear-gradient(#dd4444 0,#dd4444 3px,#cc0000 3px)"></div><div style="position:absolute;left:959px;top:822px;width:346px;height:1px;background:#7a7a7a"></div><div style="position:absolute;left:959px;top:823px;width:346px;height:1px;background:#3d3d3d"></div><div style="position:absolute;left:959px;top:824px;width:346px;height:3px;background:linear-gradient(90deg,#b01e1e 0%,#b01e1e 45%,#b3a21e 52%,#739e52 60%,#739e52 100%)"></div><div style="position:absolute;left:959px;top:827px;width:346px;height:1px;background:#777"></div><div style="position:absolute;left:1305px;top:813px;width:1px;height:15px;background:#7a7a7a"></div>
<div style="position:absolute;left:1336px;top:724px;width:346px;height:1px;background:#3d3d3d"></div><div style="position:absolute;left:1336px;top:724px;width:1px;height:10px;background:#3d3d3d"></div><div style="position:absolute;left:1337px;top:725px;width:182px;height:9px;background:linear-gradient(#b4da90 0,#b4da90 3px,#8cc75a 3px)"></div><div style="position:absolute;left:1337px;top:734px;width:345px;height:1px;background:#7a7a7a"></div><div style="position:absolute;left:1337px;top:735px;width:345px;height:1px;background:#3d3d3d"></div><div style="position:absolute;left:1337px;top:736px;width:345px;height:3px;background:linear-gradient(90deg,#b01e1e 0%,#b3a21e 12%,#739e52 30%,#739e52 100%)"></div><div style="position:absolute;left:1337px;top:739px;width:345px;height:1px;background:#777"></div><div style="position:absolute;left:1682px;top:725px;width:1px;height:15px;background:#7a7a7a"></div>
<div style="position:absolute;left:1336px;top:782px;width:346px;height:1px;background:#3d3d3d"></div><div style="position:absolute;left:1336px;top:782px;width:1px;height:10px;background:#3d3d3d"></div><div style="position:absolute;left:1337px;top:783px;width:189px;height:9px;background:linear-gradient(#b4da90 0,#b4da90 3px,#8cc75a 3px)"></div><div style="position:absolute;left:1337px;top:792px;width:345px;height:1px;background:#7a7a7a"></div><div style="position:absolute;left:1337px;top:793px;width:345px;height:1px;background:#3d3d3d"></div><div style="position:absolute;left:1337px;top:794px;width:345px;height:3px;background:linear-gradient(90deg,#b01e1e 0%,#b3a21e 22%,#739e52 40%,#739e52 100%)"></div><div style="position:absolute;left:1337px;top:797px;width:345px;height:1px;background:#777"></div><div style="position:absolute;left:1682px;top:783px;width:1px;height:15px;background:#7a7a7a"></div>
<div style="position:absolute;left:1336px;top:840px;width:346px;height:1px;background:#3d3d3d"></div><div style="position:absolute;left:1336px;top:840px;width:1px;height:10px;background:#3d3d3d"></div><div style="position:absolute;left:1337px;top:841px;width:63px;height:9px;background:linear-gradient(#e3b45a 0,#e3b45a 3px,#d4900c 3px)"></div><div style="position:absolute;left:1337px;top:850px;width:345px;height:1px;background:#7a7a7a"></div><div style="position:absolute;left:1337px;top:851px;width:345px;height:1px;background:#3d3d3d"></div><div style="position:absolute;left:1337px;top:852px;width:345px;height:3px;background:linear-gradient(90deg,#b01e1e 0%,#b3a21e 22%,#739e52 40%,#739e52 100%)"></div><div style="position:absolute;left:1337px;top:855px;width:345px;height:1px;background:#777"></div><div style="position:absolute;left:1682px;top:841px;width:1px;height:15px;background:#7a7a7a"></div>
<div class="t" style="left:469.50px;top:22.80px;font-size:21px;line-height:21px;color:#333;letter-spacing:0.379px;font-weight:normal">Calculation</div>
<div class="t" style="left:661.70px;top:22.80px;font-size:21px;line-height:21px;color:#333;letter-spacing:0.191px;font-weight:normal">Layer</div>
<div class="t" style="left:799.00px;top:22.80px;font-size:21px;line-height:21px;color:#333;letter-spacing:0.242px;font-weight:normal">Examples</div>
<div class="t" style="left:976.80px;top:22.80px;font-size:21px;line-height:21px;color:#333;letter-spacing:0.793px;font-weight:normal">Instructions</div>
<div class="t" style="left:1177.00px;top:22.80px;font-size:21px;line-height:21px;color:#333;letter-spacing:0.179px;font-weight:normal">Ubakus</div>
<div class="t" style="left:1818.70px;top:23.00px;font-size:21px;line-height:21px;color:#222;letter-spacing:0.312px;font-weight:normal">Log in</div>
<div class="t" style="left:5.70px;top:88.00px;font-size:20px;line-height:20px;color:#111;letter-spacing:-0.195px;font-weight:normal">Inside:</div>
<div class="t" style="left:80.00px;top:86.20px;font-size:21px;line-height:21px;color:#000;letter-spacing:0.412px;font-weight:normal;-webkit-text-stroke:0.25px #000">Reduced air circulation</div>
<div class="t" style="left:500.00px;top:86.00px;font-size:21px;line-height:21px;color:#000;letter-spacing:1.321px;font-weight:normal;-webkit-text-stroke:0.25px #000">20</div>
<div class="t" style="left:552.00px;top:87.80px;font-size:20px;line-height:20px;color:#111;letter-spacing:0.002px;font-weight:normal">°C</div>
<div class="t" style="left:597.00px;top:86.00px;font-size:21px;line-height:21px;color:#000;letter-spacing:1.821px;font-weight:normal;-webkit-text-stroke:0.25px #000">60</div>
<div class="t" style="left:650.50px;top:87.80px;font-size:20px;line-height:20px;color:#111;letter-spacing:-0.479px;font-weight:normal">% humidity</div>
<div class="t" style="left:774.00px;top:87.70px;font-size:20.5px;line-height:20.5px;color:#1a1a1a;letter-spacing:0.400px;font-weight:normal">Rsi...</div>
<div class="t" style="left:72.60px;top:129.00px;font-size:20px;line-height:20px;color:#111;letter-spacing:-0.144px;font-weight:normal">From inside to outside :</div>
<div class="t" style="left:412.60px;top:129.00px;font-size:20px;line-height:20px;color:#3333cc;letter-spacing:-0.194px;font-weight:normal">reverse</div>
<div class="t" style="left:494.00px;top:129.00px;font-size:20px;line-height:20px;color:#111;letter-spacing:-0.504px;font-weight:normal">Thickness</div>
<div class="t" style="left:613.60px;top:129.00px;font-size:20px;line-height:20px;color:#111;letter-spacing:-0.400px;font-weight:normal">Width</div>
<div class="t" style="left:733.00px;top:129.00px;font-size:20px;line-height:20px;color:#111;letter-spacing:-0.192px;font-weight:normal">Spacing</div>
<div class="t" style="left:33.00px;top:171.00px;font-size:21px;line-height:21px;color:#000;letter-spacing:0.000px;font-weight:normal">1</div>
<div class="t" style="left:78.40px;top:170.20px;font-size:21px;line-height:21px;color:#000;letter-spacing:0.691px;font-weight:normal;-webkit-text-stroke:0.25px #000">Gipskartonplatte</div>
<div class="t" style="left:500.00px;top:170.00px;font-size:21px;line-height:21px;color:#000;letter-spacing:1.269px;font-weight:normal;-webkit-text-stroke:0.25px #000">12,5</div>
<div class="t" style="left:552.00px;top:172.00px;font-size:20px;line-height:20px;color:#000;letter-spacing:-0.660px;font-weight:normal">mm</div>
<div class="t" style="left:32.00px;top:214.00px;font-size:21px;line-height:21px;color:#000;letter-spacing:0.000px;font-weight:normal">2</div>
<div class="t" style="left:78.40px;top:213.20px;font-size:21px;line-height:21px;color:#000;letter-spacing:0.407px;font-weight:normal;-webkit-text-stroke:0.25px #000">Hartschaum, PUR, alukaschiert</div>
<div class="t" style="left:500.00px;top:213.00px;font-size:21px;line-height:21px;color:#000;letter-spacing:1.921px;font-weight:normal;-webkit-text-stroke:0.25px #000">25</div>
<div class="t" style="left:552.00px;top:215.00px;font-size:20px;line-height:20px;color:#000;letter-spacing:-0.660px;font-weight:normal">mm</div>
<div class="t" style="left:33.00px;top:258.00px;font-size:21px;line-height:21px;color:#000;letter-spacing:0.000px;font-weight:normal">3</div>
<div class="t" style="left:78.40px;top:257.20px;font-size:21px;line-height:21px;color:#000;letter-spacing:0.407px;font-weight:normal;-webkit-text-stroke:0.25px #000">Hartschaum, PUR, alukaschiert</div>
<div class="t" style="left:500.00px;top:257.00px;font-size:21px;line-height:21px;color:#000;letter-spacing:1.321px;font-weight:normal;-webkit-text-stroke:0.25px #000">200</div>
<div class="t" style="left:552.00px;top:259.00px;font-size:20px;line-height:20px;color:#000;letter-spacing:-0.660px;font-weight:normal">mm</div>
<div class="t" style="left:33.00px;top:345.00px;font-size:21px;line-height:21px;color:#000;letter-spacing:0.000px;font-weight:normal">4</div>
<div class="t" style="left:78.40px;top:344.20px;font-size:21px;line-height:21px;color:#000;letter-spacing:0.407px;font-weight:normal;-webkit-text-stroke:0.25px #000">Hartschaum, PUR, alukaschiert</div>
<div class="t" style="left:500.00px;top:344.00px;font-size:21px;line-height:21px;color:#000;letter-spacing:1.921px;font-weight:normal;-webkit-text-stroke:0.25px #000">25</div>
<div class="t" style="left:552.00px;top:346.00px;font-size:20px;line-height:20px;color:#000;letter-spacing:-0.660px;font-weight:normal">mm</div>
<div class="t" style="left:33.00px;top:388.00px;font-size:21px;line-height:21px;color:#000;letter-spacing:0.000px;font-weight:normal">5</div>
<div class="t" style="left:78.40px;top:387.20px;font-size:21px;line-height:21px;color:#000;letter-spacing:0.476px;font-weight:normal;-webkit-text-stroke:0.25px #000">OSB-Platte (DIN EN ISO 10456)</div>
<div class="t" style="left:500.00px;top:387.00px;font-size:21px;line-height:21px;color:#000;letter-spacing:1.921px;font-weight:normal;-webkit-text-stroke:0.25px #000">10</div>
<div class="t" style="left:552.00px;top:389.00px;font-size:20px;line-height:20px;color:#000;letter-spacing:-0.660px;font-weight:normal">mm</div>
<div class="t" style="left:32.00px;top:432.00px;font-size:21px;line-height:21px;color:#000;letter-spacing:0.000px;font-weight:normal">6</div>
<div class="t" style="left:552.00px;top:433.00px;font-size:20px;line-height:20px;color:#000;letter-spacing:-0.660px;font-weight:normal">mm</div>
<div class="t" style="left:78.40px;top:300.20px;font-size:21px;line-height:21px;color:#000;letter-spacing:0.419px;font-weight:normal;-webkit-text-stroke:0.25px #000">Fichte</div>
<div class="t" style="left:500.00px;top:300.00px;font-size:21px;line-height:21px;color:#000;letter-spacing:1.321px;font-weight:normal;-webkit-text-stroke:0.25px #000">200</div>
<div class="t" style="left:552.00px;top:302.00px;font-size:20px;line-height:20px;color:#000;letter-spacing:-0.660px;font-weight:normal">mm</div>
<div class="t" style="left:621.00px;top:300.00px;font-size:21px;line-height:21px;color:#000;letter-spacing:0.421px;font-weight:normal;-webkit-text-stroke:0.25px #000">47</div>
<div class="t" style="left:671.60px;top:302.00px;font-size:20px;line-height:20px;color:#000;letter-spacing:-0.260px;font-weight:normal">mm</div>
<div class="t" style="left:740.00px;top:300.00px;font-size:21px;line-height:21px;color:#000;letter-spacing:1.121px;font-weight:normal;-webkit-text-stroke:0.25px #000">600</div>
<div class="t" style="left:791.40px;top:302.00px;font-size:20px;line-height:20px;color:#000;letter-spacing:0.340px;font-weight:normal">mm</div>
<div class="t" style="left:6.20px;top:475.80px;font-size:20px;line-height:20px;color:#111;letter-spacing:-0.500px;font-weight:normal">Outside</div>
<div class="t" style="left:80.00px;top:474.20px;font-size:21px;line-height:21px;color:#000;letter-spacing:0.717px;font-weight:normal;-webkit-text-stroke:0.25px #000">Direct transition to outside air</div>
<div class="t" style="left:501.00px;top:474.00px;font-size:21px;line-height:21px;color:#000;letter-spacing:1.607px;font-weight:normal;-webkit-text-stroke:0.25px #000">-5</div>
<div class="t" style="left:552.00px;top:475.80px;font-size:20px;line-height:20px;color:#111;letter-spacing:0.002px;font-weight:normal">°C</div>
<div class="t" style="left:598.00px;top:474.00px;font-size:21px;line-height:21px;color:#000;letter-spacing:0.321px;font-weight:normal;-webkit-text-stroke:0.25px #000">99</div>
<div class="t" style="left:650.50px;top:475.80px;font-size:20px;line-height:20px;color:#111;letter-spacing:-0.479px;font-weight:normal">% humidity</div>
<div class="t" style="left:774.00px;top:475.70px;font-size:20.5px;line-height:20.5px;color:#1a1a1a;letter-spacing:0.431px;font-weight:normal">Rse...</div>
<div class="t" style="left:1520.50px;top:92.20px;font-size:20px;line-height:20px;color:#000;letter-spacing:0.000px;font-weight:normal">5</div>
<div class="t" style="left:1490.50px;top:106.70px;font-size:20px;line-height:20px;color:#000;letter-spacing:0.000px;font-weight:normal">4</div>
<div class="t" style="left:1490.50px;top:196.20px;font-size:20px;line-height:20px;color:#000;letter-spacing:0.000px;font-weight:normal">3</div>
<div class="t" style="left:1489.50px;top:285.70px;font-size:20px;line-height:20px;color:#000;letter-spacing:0.000px;font-weight:normal">2</div>
<div class="t" style="left:1459.50px;top:300.70px;font-size:20px;line-height:20px;color:#000;letter-spacing:0.000px;font-weight:normal">1</div>
<div class="t" style="left:1465.70px;top:71.90px;font-size:20px;line-height:20px;color:#888;letter-spacing:0.749px;font-weight:normal">Außen</div>
<div class="t" style="left:1469.50px;top:322.60px;font-size:20px;line-height:20px;color:#888;letter-spacing:0.644px;font-weight:normal">Innen</div>
<div class="t" style="left:1745.00px;top:323.00px;font-size:20px;line-height:20px;color:#bbb;letter-spacing:0.604px;font-weight:normal">ubakus.de</div>
<div class="t" style="left:1097.00px;top:107.00px;font-size:20px;line-height:20px;color:#888;letter-spacing:1.177px;font-weight:normal">25</div>
<div class="t" style="left:1096.70px;top:197.00px;font-size:20px;line-height:20px;color:#888;letter-spacing:1.027px;font-weight:normal">200</div>
<div class="t" style="left:1096.70px;top:285.60px;font-size:20px;line-height:20px;color:#888;letter-spacing:1.477px;font-weight:normal">25</div>
<div class="t" style="left:1226.70px;top:365.80px;font-size:20px;line-height:20px;color:#888;letter-spacing:-0.123px;font-weight:normal">47</div>
<div class="t" style="left:1477.80px;top:366.00px;font-size:20px;line-height:20px;color:#888;letter-spacing:0.977px;font-weight:normal">600</div>
<div class="t" style="left:201.00px;top:675.60px;font-size:31px;line-height:31px;color:#f2f2f2;letter-spacing:0.736px;font-weight:normal">U-Wert:</div>
<div class="t" style="left:319.00px;top:671.60px;font-size:36px;line-height:36px;color:#f2f2f2;letter-spacing:1.001px;font-weight:normal">0,113</div>
<div class="t" style="left:419.60px;top:686.60px;font-size:18px;line-height:18px;color:#f2f2f2;letter-spacing:0.137px;font-weight:normal">W/(m²K)</div>
<div class="t" style="left:202.00px;top:750.60px;font-size:20px;line-height:20px;color:#f2f2f2;letter-spacing:-0.265px;font-weight:normal">GEG 2020/24 Bestand U ≤ 0.24</div>
<div class="t" style="left:202.00px;top:790.60px;font-size:20px;line-height:20px;color:#f2f2f2;letter-spacing:-0.182px;font-weight:normal">Contribution to the greenhouse effect:</div>
<div class="t" style="left:202.20px;top:843.90px;font-size:17.5px;line-height:17.5px;color:#bbb;letter-spacing:0.035px;font-weight:normal">very good</div>
<div class="t" style="left:514.60px;top:843.90px;font-size:17.5px;line-height:17.5px;color:#bbb;letter-spacing:0.067px;font-weight:normal">poor</div>
<div class="t" style="left:580.10px;top:672.90px;font-size:20px;line-height:20px;color:#f2f2f2;letter-spacing:-0.263px;font-weight:normal">Condensation:0 kg/m²</div>
<div class="t" style="left:581.10px;top:730.30px;font-size:20px;line-height:20px;color:#f2f2f2;letter-spacing:-0.328px;font-weight:normal">Wood moisture: +0,0%</div>
<div class="t" style="left:580.10px;top:788.30px;font-size:20px;line-height:20px;color:#f2f2f2;letter-spacing:-0.182px;font-weight:normal">Drying time:-</div>
<div class="t" style="left:580.60px;top:841.50px;font-size:17.5px;line-height:17.5px;color:#bbb;letter-spacing:-0.040px;font-weight:normal">very good</div>
<div class="t" style="left:892.90px;top:841.50px;font-size:17.5px;line-height:17.5px;color:#bbb;letter-spacing:-0.033px;font-weight:normal">poor</div>
<div class="t" style="left:958.00px;top:672.60px;font-size:20px;line-height:20px;color:#f2f2f2;letter-spacing:-0.221px;font-weight:normal">sd value:183386 m</div>
<div class="t" style="left:1133.30px;top:672.60px;font-size:20px;line-height:20px;color:#f2f2f2;letter-spacing:-0.264px;font-weight:normal">Thickness:27.25 cm</div>
<div class="t" style="left:1164.90px;top:699.30px;font-size:20px;line-height:20px;color:#f2f2f2;letter-spacing:-0.320px;font-weight:normal">Weight:29 kg/m²</div>
<div class="t" style="left:957.50px;top:729.80px;font-size:20px;line-height:20px;color:#f2f2f2;letter-spacing:-0.191px;font-weight:normal">Interior surface:19,0°C (64%)</div>
<div class="t" style="left:957.50px;top:787.50px;font-size:20px;line-height:20px;color:#f2f2f2;letter-spacing:-0.261px;font-weight:normal">Drying reserve:0 g/m²a</div>
<div class="t" style="left:957.60px;top:841.50px;font-size:17.5px;line-height:17.5px;color:#bbb;letter-spacing:0.201px;font-weight:normal">poor</div>
<div class="t" style="left:1229.30px;top:841.50px;font-size:17.5px;line-height:17.5px;color:#bbb;letter-spacing:-0.053px;font-weight:normal">very good</div>
<div class="t" style="left:1336.40px;top:672.80px;font-size:20px;line-height:20px;color:#f2f2f2;letter-spacing:-0.211px;font-weight:normal">Temperature amplification damping</div>
<div class="t" style="left:1335.40px;top:699.60px;font-size:20px;line-height:20px;color:#f2f2f2;letter-spacing:-0.190px;font-weight:normal">(1/TAV):10,6</div>
<div class="t" style="left:1335.40px;top:757.50px;font-size:20px;line-height:20px;color:#f2f2f2;letter-spacing:-0.141px;font-weight:normal">Phase shift:9,8 h</div>
<div class="t" style="left:1335.40px;top:816.00px;font-size:20px;line-height:20px;color:#f2f2f2;letter-spacing:-0.212px;font-weight:normal">Internal storage capacity:18.4 kJ/m²K</div>
</body></html>
